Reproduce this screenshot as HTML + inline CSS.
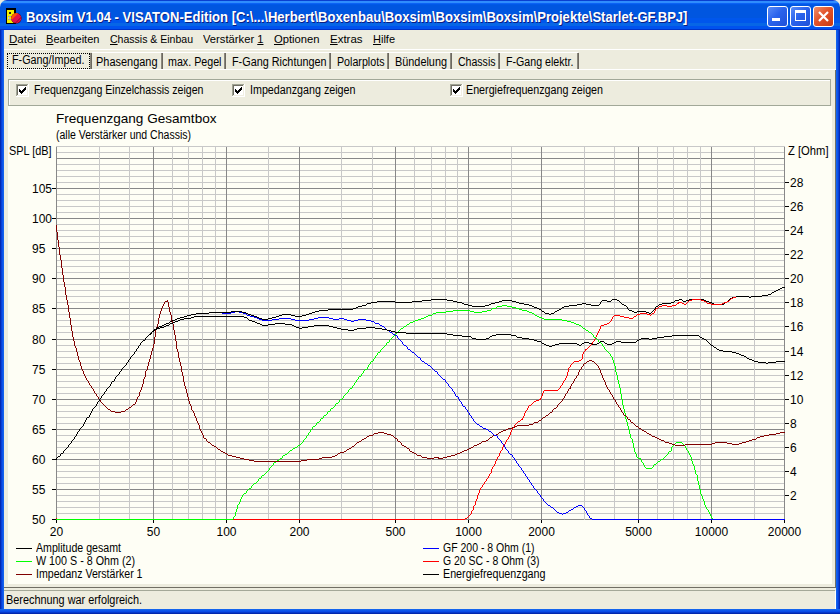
<!DOCTYPE html>
<html><head><meta charset="utf-8"><style>
html,body{margin:0;padding:0;}
body{width:840px;height:614px;overflow:hidden;position:relative;background:#edecde;font-family:"Liberation Sans",sans-serif;}
.r{position:absolute;}
.t{position:absolute;white-space:nowrap;line-height:14px;font-size:11px;color:#000;}
.ax{font-size:12px;}
</style></head><body>
<div class="r" style="left:0;top:0;width:840px;height:30px;border-radius:7px 7px 0 0;background:linear-gradient(180deg,#0a3fd0 0px,#0a3fd0 1px,#2f8dfd 1px,#2f8dfd 3px,#0b62f5 3px,#0b62f5 4px,#0058e8 4px,#0058e8 5px,#0056e0 5px,#0056e0 18px,#0056ec 18px,#0056ec 23px,#0766e6 23px,#0766e6 26px,#0052ee 26px,#0052ee 29px,#0032c8 29px,#0032c8 30px);"></div>
<div class="r" style="left:0px;top:30px;width:4px;height:584px;background:linear-gradient(90deg,#001ea0,#0a4be8 50%,#166aee);"></div>
<div class="r" style="left:836px;top:30px;width:4px;height:584px;background:linear-gradient(90deg,#166aee,#0a4be8 50%,#001ea0);"></div>
<div class="r" style="left:0px;top:609px;width:840px;height:5px;background:linear-gradient(180deg,#166aee,#0a4be8 50%,#001ea0);"></div>
<svg class="r" style="left:0;top:0" width="24" height="28" shape-rendering="crispEdges"><rect x="6" y="8" width="10" height="16" fill="#000"/><rect x="7" y="10" width="7" height="13" fill="#f4f000"/><rect x="9" y="12" width="2" height="2" fill="#222"/><rect x="8" y="16" width="3" height="1" fill="#aaa"/><rect x="8" y="17" width="1" height="2" fill="#ccc"/><rect x="8" y="19" width="3" height="1" fill="#aaa"/></svg>
<svg class="r" style="left:0;top:0" width="24" height="28"><defs><clipPath id="ball"><circle cx="16.3" cy="18.3" r="5"/></clipPath></defs><circle cx="16.3" cy="18.3" r="5.2" fill="#300"/><g clip-path="url(#ball)"><rect x="10" y="12" width="14" height="14" fill="#e0104a"/><path d="M10 12 L19.5 12 L10 21.5 Z" fill="#ff5a00"/><path d="M16 25 L23 18 L23 21 L19 25 Z" fill="#800020"/><path d="M13 25 L23 15 L23 16 L14 25 Z" fill="#900028"/></g></svg>
<div id="t1" class="t title" style="left:26px;top:10px;font-size:14px;color:#fff;transform:scaleX(0.9330);transform-origin:0 0;font-weight:bold;text-shadow:1px 1px 0 #0a1e80;">Boxsim V1.04 - VISATON-Edition [C:\...\Herbert\Boxenbau\Boxsim\Boxsim\Boxsim\Projekte\Starlet-GF.BPJ]</div>
<div class="r" style="left:767px;top:6px;width:21px;height:21px;background:linear-gradient(135deg,#5a8cf8,#2a63ec 45%,#1f50d8);border:1px solid #fff;box-sizing:border-box;border-radius:3px;"></div>
<div class="r" style="left:790px;top:6px;width:21px;height:21px;background:linear-gradient(135deg,#5a8cf8,#2a63ec 45%,#1f50d8);border:1px solid #fff;box-sizing:border-box;border-radius:3px;"></div>
<div class="r" style="left:813px;top:6px;width:21px;height:21px;background:linear-gradient(135deg,#f0906c,#e2532b 45%,#c83a12);border:1px solid #fff;box-sizing:border-box;border-radius:3px;"></div>
<div class="r" style="left:772px;top:18px;width:8px;height:3px;background:#fff;"></div>
<div class="r" style="left:795px;top:10px;width:11px;height:11px;border:1px solid #fff;border-top-width:3px;box-sizing:border-box"></div>
<svg class="r" style="left:813px;top:6px" width="21" height="21"><path d="M6 6 L15 15 M15 6 L6 15" stroke="#fff" stroke-width="2.2"/></svg>
<div class="r" style="left:4px;top:49px;width:832px;height:1px;background:#fff;"></div>
<div id="t2" class="t menu" style="left:9px;top:32px;font-size:11px;color:#000;transform:scaleX(1.0505);transform-origin:0 0;"><u>D</u>atei</div>
<div id="t3" class="t menu" style="left:46px;top:32px;font-size:11px;color:#000;transform:scaleX(1.0053);transform-origin:0 0;"><u>B</u>earbeiten</div>
<div id="t4" class="t menu" style="left:110px;top:32px;font-size:11px;color:#000;transform:scaleX(0.9557);transform-origin:0 0;"><u>C</u>hassis &amp; Einbau</div>
<div id="t5" class="t menu" style="left:203px;top:32px;font-size:11px;color:#000;transform:scaleX(1.0200);transform-origin:0 0;">Verst&auml;rker <u>1</u></div>
<div id="t6" class="t menu" style="left:274px;top:32px;font-size:11px;color:#000;transform:scaleX(1.0189);transform-origin:0 0;"><u>O</u>ptionen</div>
<div id="t7" class="t menu" style="left:330px;top:32px;font-size:11px;color:#000;transform:scaleX(1.0421);transform-origin:0 0;"><u>E</u>xtras</div>
<div id="t8" class="t menu" style="left:373px;top:32px;font-size:11px;color:#000;transform:scaleX(0.9993);transform-origin:0 0;"><u>H</u>ilfe</div>
<div class="r" style="left:92px;top:52px;width:486px;height:1px;background:#fff;"></div>
<div class="r" style="left:4px;top:69px;width:832px;height:1px;background:#fff;"></div>
<div class="r" style="left:90px;top:53px;width:1px;height:16px;background:#8a877c;"></div>
<div class="r" style="left:91px;top:53px;width:1px;height:16px;background:#6c6860;"></div>
<div class="r" style="left:161px;top:53px;width:1px;height:16px;background:#8a877c;"></div>
<div class="r" style="left:162px;top:53px;width:1px;height:16px;background:#6c6860;"></div>
<div class="r" style="left:224px;top:53px;width:1px;height:16px;background:#8a877c;"></div>
<div class="r" style="left:225px;top:53px;width:1px;height:16px;background:#6c6860;"></div>
<div class="r" style="left:329px;top:53px;width:1px;height:16px;background:#8a877c;"></div>
<div class="r" style="left:330px;top:53px;width:1px;height:16px;background:#6c6860;"></div>
<div class="r" style="left:387px;top:53px;width:1px;height:16px;background:#8a877c;"></div>
<div class="r" style="left:388px;top:53px;width:1px;height:16px;background:#6c6860;"></div>
<div class="r" style="left:450px;top:53px;width:1px;height:16px;background:#8a877c;"></div>
<div class="r" style="left:451px;top:53px;width:1px;height:16px;background:#6c6860;"></div>
<div class="r" style="left:498px;top:53px;width:1px;height:16px;background:#8a877c;"></div>
<div class="r" style="left:499px;top:53px;width:1px;height:16px;background:#6c6860;"></div>
<div class="r" style="left:577px;top:53px;width:1px;height:16px;background:#8a877c;"></div>
<div class="r" style="left:578px;top:53px;width:1px;height:16px;background:#6c6860;"></div>
<div class="r" style="left:7px;top:53px;width:83px;height:16px;border:1px dotted #000;box-sizing:border-box"></div>
<div id="t9" class="t tab" style="left:12px;top:53px;font-size:12px;color:#000;transform:scaleX(0.8984);transform-origin:0 0;">F-Gang/Imped.</div>
<div id="t10" class="t tab" style="left:96px;top:55px;font-size:12px;color:#000;transform:scaleX(0.9124);transform-origin:0 0;">Phasengang</div>
<div id="t11" class="t tab" style="left:168px;top:55px;font-size:12px;color:#000;transform:scaleX(0.8912);transform-origin:0 0;">max. Pegel</div>
<div id="t12" class="t tab" style="left:232px;top:55px;font-size:12px;color:#000;transform:scaleX(0.9023);transform-origin:0 0;">F-Gang Richtungen</div>
<div id="t13" class="t tab" style="left:337px;top:55px;font-size:12px;color:#000;transform:scaleX(0.8899);transform-origin:0 0;">Polarplots</div>
<div id="t14" class="t tab" style="left:395px;top:55px;font-size:12px;color:#000;transform:scaleX(0.9061);transform-origin:0 0;">B&uuml;ndelung</div>
<div id="t15" class="t tab" style="left:458px;top:55px;font-size:12px;color:#000;transform:scaleX(0.8785);transform-origin:0 0;">Chassis</div>
<div id="t16" class="t tab" style="left:506px;top:55px;font-size:12px;color:#000;transform:scaleX(0.8878);transform-origin:0 0;">F-Gang elektr.</div>
<div class="r" style="left:8px;top:79px;width:823px;height:27px;border:1px solid #a2a898;box-sizing:border-box;box-shadow:inset 1px 1px 0 #fff;"></div>
<svg class="r" style="left:16px;top:84px" width="13" height="13" shape-rendering="crispEdges"><rect x="0" y="0" width="12" height="1" fill="#a0a494"/><rect x="0" y="0" width="1" height="12" fill="#a0a494"/><rect x="1" y="1" width="10" height="1" fill="#716f64"/><rect x="1" y="1" width="1" height="10" fill="#716f64"/><rect x="12" y="0" width="1" height="13" fill="#fff"/><rect x="0" y="12" width="13" height="1" fill="#fff"/><rect x="11" y="1" width="1" height="11" fill="#f1efe2"/><rect x="1" y="11" width="11" height="1" fill="#f1efe2"/><rect x="2" y="2" width="9" height="9" fill="#fff"/><rect x="9" y="3" width="1" height="1" fill="#000"/><rect x="8" y="4" width="1" height="1" fill="#000"/><rect x="9" y="4" width="1" height="1" fill="#000"/><rect x="3" y="5" width="1" height="1" fill="#000"/><rect x="7" y="5" width="1" height="1" fill="#000"/><rect x="8" y="5" width="1" height="1" fill="#000"/><rect x="9" y="5" width="1" height="1" fill="#000"/><rect x="3" y="6" width="1" height="1" fill="#000"/><rect x="4" y="6" width="1" height="1" fill="#000"/><rect x="6" y="6" width="1" height="1" fill="#000"/><rect x="7" y="6" width="1" height="1" fill="#000"/><rect x="8" y="6" width="1" height="1" fill="#000"/><rect x="3" y="7" width="1" height="1" fill="#000"/><rect x="4" y="7" width="1" height="1" fill="#000"/><rect x="5" y="7" width="1" height="1" fill="#000"/><rect x="6" y="7" width="1" height="1" fill="#000"/><rect x="7" y="7" width="1" height="1" fill="#000"/><rect x="4" y="8" width="1" height="1" fill="#000"/><rect x="5" y="8" width="1" height="1" fill="#000"/><rect x="6" y="8" width="1" height="1" fill="#000"/><rect x="5" y="9" width="1" height="1" fill="#000"/></svg>
<svg class="r" style="left:232px;top:84px" width="13" height="13" shape-rendering="crispEdges"><rect x="0" y="0" width="12" height="1" fill="#a0a494"/><rect x="0" y="0" width="1" height="12" fill="#a0a494"/><rect x="1" y="1" width="10" height="1" fill="#716f64"/><rect x="1" y="1" width="1" height="10" fill="#716f64"/><rect x="12" y="0" width="1" height="13" fill="#fff"/><rect x="0" y="12" width="13" height="1" fill="#fff"/><rect x="11" y="1" width="1" height="11" fill="#f1efe2"/><rect x="1" y="11" width="11" height="1" fill="#f1efe2"/><rect x="2" y="2" width="9" height="9" fill="#fff"/><rect x="9" y="3" width="1" height="1" fill="#000"/><rect x="8" y="4" width="1" height="1" fill="#000"/><rect x="9" y="4" width="1" height="1" fill="#000"/><rect x="3" y="5" width="1" height="1" fill="#000"/><rect x="7" y="5" width="1" height="1" fill="#000"/><rect x="8" y="5" width="1" height="1" fill="#000"/><rect x="9" y="5" width="1" height="1" fill="#000"/><rect x="3" y="6" width="1" height="1" fill="#000"/><rect x="4" y="6" width="1" height="1" fill="#000"/><rect x="6" y="6" width="1" height="1" fill="#000"/><rect x="7" y="6" width="1" height="1" fill="#000"/><rect x="8" y="6" width="1" height="1" fill="#000"/><rect x="3" y="7" width="1" height="1" fill="#000"/><rect x="4" y="7" width="1" height="1" fill="#000"/><rect x="5" y="7" width="1" height="1" fill="#000"/><rect x="6" y="7" width="1" height="1" fill="#000"/><rect x="7" y="7" width="1" height="1" fill="#000"/><rect x="4" y="8" width="1" height="1" fill="#000"/><rect x="5" y="8" width="1" height="1" fill="#000"/><rect x="6" y="8" width="1" height="1" fill="#000"/><rect x="5" y="9" width="1" height="1" fill="#000"/></svg>
<svg class="r" style="left:450px;top:84px" width="13" height="13" shape-rendering="crispEdges"><rect x="0" y="0" width="12" height="1" fill="#a0a494"/><rect x="0" y="0" width="1" height="12" fill="#a0a494"/><rect x="1" y="1" width="10" height="1" fill="#716f64"/><rect x="1" y="1" width="1" height="10" fill="#716f64"/><rect x="12" y="0" width="1" height="13" fill="#fff"/><rect x="0" y="12" width="13" height="1" fill="#fff"/><rect x="11" y="1" width="1" height="11" fill="#f1efe2"/><rect x="1" y="11" width="11" height="1" fill="#f1efe2"/><rect x="2" y="2" width="9" height="9" fill="#fff"/><rect x="9" y="3" width="1" height="1" fill="#000"/><rect x="8" y="4" width="1" height="1" fill="#000"/><rect x="9" y="4" width="1" height="1" fill="#000"/><rect x="3" y="5" width="1" height="1" fill="#000"/><rect x="7" y="5" width="1" height="1" fill="#000"/><rect x="8" y="5" width="1" height="1" fill="#000"/><rect x="9" y="5" width="1" height="1" fill="#000"/><rect x="3" y="6" width="1" height="1" fill="#000"/><rect x="4" y="6" width="1" height="1" fill="#000"/><rect x="6" y="6" width="1" height="1" fill="#000"/><rect x="7" y="6" width="1" height="1" fill="#000"/><rect x="8" y="6" width="1" height="1" fill="#000"/><rect x="3" y="7" width="1" height="1" fill="#000"/><rect x="4" y="7" width="1" height="1" fill="#000"/><rect x="5" y="7" width="1" height="1" fill="#000"/><rect x="6" y="7" width="1" height="1" fill="#000"/><rect x="7" y="7" width="1" height="1" fill="#000"/><rect x="4" y="8" width="1" height="1" fill="#000"/><rect x="5" y="8" width="1" height="1" fill="#000"/><rect x="6" y="8" width="1" height="1" fill="#000"/><rect x="5" y="9" width="1" height="1" fill="#000"/></svg>
<div id="t17" class="t " style="left:34px;top:83px;font-size:12px;color:#000;transform:scaleX(0.8822);transform-origin:0 0;">Frequenzgang Einzelchassis zeigen</div>
<div id="t18" class="t " style="left:250px;top:83px;font-size:12px;color:#000;transform:scaleX(0.8934);transform-origin:0 0;">Impedanzgang zeigen</div>
<div id="t19" class="t " style="left:466px;top:83px;font-size:12px;color:#000;transform:scaleX(0.8928);transform-origin:0 0;">Energiefrequenzgang zeigen</div>
<div class="r" style="left:8px;top:106px;width:824px;height:478px;background:#fefef5;"></div>
<div class="r" style="left:4px;top:587px;width:832px;height:1px;background:#716f64;"></div>
<div class="r" style="left:835px;top:70px;width:1px;height:518px;background:#716f64;"></div>
<div class="r" style="left:4px;top:590px;width:831px;height:1px;background:#a4a898;"></div>
<div class="r" style="left:835px;top:591px;width:1px;height:18px;background:#fff;"></div>
<div id="t20" class="t " style="left:6px;top:593px;font-size:12px;color:#000;transform:scaleX(0.9061);transform-origin:0 0;">Berechnung war erfolgreich.</div>
<svg class="r" style="left:0;top:0" width="840" height="614" shape-rendering="crispEdges">
<rect x="56" y="519" width="729" height="1" fill="#888"/>
<rect x="56" y="513" width="729" height="1" fill="#c8c8c8"/>
<rect x="56" y="507" width="729" height="1" fill="#c8c8c8"/>
<rect x="56" y="501" width="729" height="1" fill="#c8c8c8"/>
<rect x="56" y="495" width="729" height="1" fill="#c8c8c8"/>
<rect x="56" y="489" width="729" height="1" fill="#888"/>
<rect x="56" y="483" width="729" height="1" fill="#c8c8c8"/>
<rect x="56" y="477" width="729" height="1" fill="#c8c8c8"/>
<rect x="56" y="471" width="729" height="1" fill="#c8c8c8"/>
<rect x="56" y="465" width="729" height="1" fill="#c8c8c8"/>
<rect x="56" y="459" width="729" height="1" fill="#888"/>
<rect x="56" y="453" width="729" height="1" fill="#c8c8c8"/>
<rect x="56" y="447" width="729" height="1" fill="#c8c8c8"/>
<rect x="56" y="441" width="729" height="1" fill="#c8c8c8"/>
<rect x="56" y="435" width="729" height="1" fill="#c8c8c8"/>
<rect x="56" y="429" width="729" height="1" fill="#888"/>
<rect x="56" y="423" width="729" height="1" fill="#c8c8c8"/>
<rect x="56" y="417" width="729" height="1" fill="#c8c8c8"/>
<rect x="56" y="411" width="729" height="1" fill="#c8c8c8"/>
<rect x="56" y="405" width="729" height="1" fill="#c8c8c8"/>
<rect x="56" y="399" width="729" height="1" fill="#888"/>
<rect x="56" y="393" width="729" height="1" fill="#c8c8c8"/>
<rect x="56" y="387" width="729" height="1" fill="#c8c8c8"/>
<rect x="56" y="381" width="729" height="1" fill="#c8c8c8"/>
<rect x="56" y="375" width="729" height="1" fill="#c8c8c8"/>
<rect x="56" y="369" width="729" height="1" fill="#888"/>
<rect x="56" y="363" width="729" height="1" fill="#c8c8c8"/>
<rect x="56" y="357" width="729" height="1" fill="#c8c8c8"/>
<rect x="56" y="351" width="729" height="1" fill="#c8c8c8"/>
<rect x="56" y="345" width="729" height="1" fill="#c8c8c8"/>
<rect x="56" y="339" width="729" height="1" fill="#888"/>
<rect x="56" y="332" width="729" height="1" fill="#c8c8c8"/>
<rect x="56" y="326" width="729" height="1" fill="#c8c8c8"/>
<rect x="56" y="320" width="729" height="1" fill="#c8c8c8"/>
<rect x="56" y="314" width="729" height="1" fill="#c8c8c8"/>
<rect x="56" y="308" width="729" height="1" fill="#888"/>
<rect x="56" y="302" width="729" height="1" fill="#c8c8c8"/>
<rect x="56" y="296" width="729" height="1" fill="#c8c8c8"/>
<rect x="56" y="290" width="729" height="1" fill="#c8c8c8"/>
<rect x="56" y="284" width="729" height="1" fill="#c8c8c8"/>
<rect x="56" y="278" width="729" height="1" fill="#888"/>
<rect x="56" y="272" width="729" height="1" fill="#c8c8c8"/>
<rect x="56" y="266" width="729" height="1" fill="#c8c8c8"/>
<rect x="56" y="260" width="729" height="1" fill="#c8c8c8"/>
<rect x="56" y="254" width="729" height="1" fill="#c8c8c8"/>
<rect x="56" y="248" width="729" height="1" fill="#888"/>
<rect x="56" y="242" width="729" height="1" fill="#c8c8c8"/>
<rect x="56" y="236" width="729" height="1" fill="#c8c8c8"/>
<rect x="56" y="230" width="729" height="1" fill="#c8c8c8"/>
<rect x="56" y="224" width="729" height="1" fill="#c8c8c8"/>
<rect x="56" y="218" width="729" height="1" fill="#888"/>
<rect x="56" y="212" width="729" height="1" fill="#c8c8c8"/>
<rect x="56" y="206" width="729" height="1" fill="#c8c8c8"/>
<rect x="56" y="200" width="729" height="1" fill="#c8c8c8"/>
<rect x="56" y="194" width="729" height="1" fill="#c8c8c8"/>
<rect x="56" y="188" width="729" height="1" fill="#888"/>
<rect x="56" y="182" width="729" height="1" fill="#c8c8c8"/>
<rect x="56" y="176" width="729" height="1" fill="#c8c8c8"/>
<rect x="56" y="170" width="729" height="1" fill="#c8c8c8"/>
<rect x="56" y="164" width="729" height="1" fill="#c8c8c8"/>
<rect x="56" y="158" width="729" height="1" fill="#888"/>
<rect x="56" y="152" width="729" height="1" fill="#c8c8c8"/>
<rect x="56" y="146" width="729" height="1" fill="#c8c8c8"/>
<rect x="56" y="146" width="1" height="374" fill="#888"/>
<rect x="99" y="146" width="1" height="374" fill="#c8c8c8"/>
<rect x="129" y="146" width="1" height="374" fill="#c8c8c8"/>
<rect x="153" y="146" width="1" height="374" fill="#888"/>
<rect x="172" y="146" width="1" height="374" fill="#c8c8c8"/>
<rect x="188" y="146" width="1" height="374" fill="#c8c8c8"/>
<rect x="202" y="146" width="1" height="374" fill="#c8c8c8"/>
<rect x="215" y="146" width="1" height="374" fill="#c8c8c8"/>
<rect x="226" y="146" width="1" height="374" fill="#888"/>
<rect x="268" y="146" width="1" height="374" fill="#c8c8c8"/>
<rect x="299" y="146" width="1" height="374" fill="#888"/>
<rect x="341" y="146" width="1" height="374" fill="#c8c8c8"/>
<rect x="372" y="146" width="1" height="374" fill="#c8c8c8"/>
<rect x="395" y="146" width="1" height="374" fill="#888"/>
<rect x="414" y="146" width="1" height="374" fill="#c8c8c8"/>
<rect x="431" y="146" width="1" height="374" fill="#c8c8c8"/>
<rect x="445" y="146" width="1" height="374" fill="#c8c8c8"/>
<rect x="457" y="146" width="1" height="374" fill="#c8c8c8"/>
<rect x="468" y="146" width="1" height="374" fill="#888"/>
<rect x="511" y="146" width="1" height="374" fill="#c8c8c8"/>
<rect x="541" y="146" width="1" height="374" fill="#888"/>
<rect x="584" y="146" width="1" height="374" fill="#c8c8c8"/>
<rect x="614" y="146" width="1" height="374" fill="#c8c8c8"/>
<rect x="638" y="146" width="1" height="374" fill="#888"/>
<rect x="657" y="146" width="1" height="374" fill="#c8c8c8"/>
<rect x="673" y="146" width="1" height="374" fill="#c8c8c8"/>
<rect x="687" y="146" width="1" height="374" fill="#c8c8c8"/>
<rect x="700" y="146" width="1" height="374" fill="#c8c8c8"/>
<rect x="711" y="146" width="1" height="374" fill="#888"/>
<rect x="754" y="146" width="1" height="374" fill="#c8c8c8"/>
<rect x="784" y="146" width="1" height="374" fill="#888"/>
<rect x="784" y="146" width="1" height="374" fill="#888"/>
<rect x="56" y="146" width="1" height="374" fill="#888"/>
<rect x="784" y="146" width="1" height="374" fill="#888"/>
<rect x="56" y="146" width="729" height="1" fill="#c8c8c8"/>
<rect x="52" y="519" width="4" height="1" fill="#000"/>
<rect x="52" y="489" width="4" height="1" fill="#000"/>
<rect x="52" y="459" width="4" height="1" fill="#000"/>
<rect x="52" y="429" width="4" height="1" fill="#000"/>
<rect x="52" y="399" width="4" height="1" fill="#000"/>
<rect x="52" y="369" width="4" height="1" fill="#000"/>
<rect x="52" y="339" width="4" height="1" fill="#000"/>
<rect x="52" y="308" width="4" height="1" fill="#000"/>
<rect x="52" y="278" width="4" height="1" fill="#000"/>
<rect x="52" y="248" width="4" height="1" fill="#000"/>
<rect x="52" y="218" width="4" height="1" fill="#000"/>
<rect x="52" y="188" width="4" height="1" fill="#000"/>
<rect x="785" y="495" width="4" height="1" fill="#000"/>
<rect x="785" y="471" width="4" height="1" fill="#000"/>
<rect x="785" y="447" width="4" height="1" fill="#000"/>
<rect x="785" y="423" width="4" height="1" fill="#000"/>
<rect x="785" y="399" width="4" height="1" fill="#000"/>
<rect x="785" y="375" width="4" height="1" fill="#000"/>
<rect x="785" y="351" width="4" height="1" fill="#000"/>
<rect x="785" y="326" width="4" height="1" fill="#000"/>
<rect x="785" y="302" width="4" height="1" fill="#000"/>
<rect x="785" y="278" width="4" height="1" fill="#000"/>
<rect x="785" y="254" width="4" height="1" fill="#000"/>
<rect x="785" y="230" width="4" height="1" fill="#000"/>
<rect x="785" y="206" width="4" height="1" fill="#000"/>
<rect x="785" y="182" width="4" height="1" fill="#000"/>
<rect x="56" y="520" width="1" height="3" fill="#000"/>
<rect x="153" y="520" width="1" height="3" fill="#000"/>
<rect x="226" y="520" width="1" height="3" fill="#000"/>
<rect x="299" y="520" width="1" height="3" fill="#000"/>
<rect x="395" y="520" width="1" height="3" fill="#000"/>
<rect x="468" y="520" width="1" height="3" fill="#000"/>
<rect x="541" y="520" width="1" height="3" fill="#000"/>
<rect x="638" y="520" width="1" height="3" fill="#000"/>
<rect x="711" y="520" width="1" height="3" fill="#000"/>
<rect x="784" y="520" width="1" height="3" fill="#000"/>
</svg>
<div class="t ax" style="left:32px;top:513px">50</div>
<div class="t ax" style="left:32px;top:483px">55</div>
<div class="t ax" style="left:32px;top:453px">60</div>
<div class="t ax" style="left:32px;top:423px">65</div>
<div class="t ax" style="left:32px;top:393px">70</div>
<div class="t ax" style="left:32px;top:363px">75</div>
<div class="t ax" style="left:32px;top:333px">80</div>
<div class="t ax" style="left:32px;top:302px">85</div>
<div class="t ax" style="left:32px;top:272px">90</div>
<div class="t ax" style="left:32px;top:242px">95</div>
<div class="t ax" style="left:32px;top:212px">100</div>
<div class="t ax" style="left:32px;top:182px">105</div>
<div id="t21" class="t ax" style="left:790px;top:489px;font-size:12px;color:#000;">2</div>
<div id="t22" class="t ax" style="left:790px;top:465px;font-size:12px;color:#000;">4</div>
<div id="t23" class="t ax" style="left:790px;top:441px;font-size:12px;color:#000;">6</div>
<div id="t24" class="t ax" style="left:790px;top:417px;font-size:12px;color:#000;">8</div>
<div id="t25" class="t ax" style="left:790px;top:393px;font-size:12px;color:#000;">10</div>
<div id="t26" class="t ax" style="left:790px;top:369px;font-size:12px;color:#000;">12</div>
<div id="t27" class="t ax" style="left:790px;top:345px;font-size:12px;color:#000;">14</div>
<div id="t28" class="t ax" style="left:790px;top:320px;font-size:12px;color:#000;">16</div>
<div id="t29" class="t ax" style="left:790px;top:296px;font-size:12px;color:#000;">18</div>
<div id="t30" class="t ax" style="left:790px;top:272px;font-size:12px;color:#000;">20</div>
<div id="t31" class="t ax" style="left:790px;top:248px;font-size:12px;color:#000;">22</div>
<div id="t32" class="t ax" style="left:790px;top:224px;font-size:12px;color:#000;">24</div>
<div id="t33" class="t ax" style="left:790px;top:200px;font-size:12px;color:#000;">26</div>
<div id="t34" class="t ax" style="left:790px;top:176px;font-size:12px;color:#000;">28</div>
<div class="t ax" style="left:16px;width:81px;text-align:center;top:525px">20</div>
<div class="t ax" style="left:113px;width:81px;text-align:center;top:525px">50</div>
<div class="t ax" style="left:186px;width:81px;text-align:center;top:525px">100</div>
<div class="t ax" style="left:259px;width:81px;text-align:center;top:525px">200</div>
<div class="t ax" style="left:355px;width:81px;text-align:center;top:525px">500</div>
<div class="t ax" style="left:428px;width:81px;text-align:center;top:525px">1000</div>
<div class="t ax" style="left:501px;width:81px;text-align:center;top:525px">2000</div>
<div class="t ax" style="left:598px;width:81px;text-align:center;top:525px">5000</div>
<div class="t ax" style="left:671px;width:81px;text-align:center;top:525px">10000</div>
<div class="t ax" style="left:744px;width:81px;text-align:center;top:525px">20000</div>
<div id="t35" class="t ax" style="left:9px;top:144px;font-size:12px;color:#000;transform:scaleX(0.9058);transform-origin:0 0;">SPL [dB]</div>
<div id="t36" class="t ax" style="left:788px;top:144px;font-size:12px;color:#000;transform:scaleX(0.9344);transform-origin:0 0;">Z [Ohm]</div>
<div id="t37" class="t ctitle" style="left:56px;top:112px;font-size:13px;color:#000;transform:scaleX(1.0426);transform-origin:0 0;">Frequenzgang Gesamtbox</div>
<div id="t38" class="t ax" style="left:56px;top:128px;font-size:12px;color:#000;transform:scaleX(0.8763);transform-origin:0 0;">(alle Verst&auml;rker und Chassis)</div>
<div class="r" style="left:16px;top:548px;width:16px;height:1px;background:#000;"></div>
<div id="t39" class="t leg" style="left:36px;top:541px;font-size:12px;color:#000;transform:scaleX(0.8850);transform-origin:0 0;">Amplitude gesamt</div>
<div class="r" style="left:16px;top:561px;width:16px;height:1px;background:#00ff00;"></div>
<div id="t40" class="t leg" style="left:36px;top:554px;font-size:12px;color:#000;transform:scaleX(0.8943);transform-origin:0 0;">W 100 S - 8 Ohm (2)</div>
<div class="r" style="left:16px;top:574px;width:16px;height:1px;background:#800000;"></div>
<div id="t41" class="t leg" style="left:36px;top:567px;font-size:12px;color:#000;transform:scaleX(0.8821);transform-origin:0 0;">Impedanz Verst&auml;rker 1</div>
<div class="r" style="left:423px;top:548px;width:16px;height:1px;background:#0000ff;"></div>
<div id="t42" class="t leg" style="left:443px;top:541px;font-size:12px;color:#000;transform:scaleX(0.8739);transform-origin:0 0;">GF 200 - 8 Ohm (1)</div>
<div class="r" style="left:423px;top:561px;width:16px;height:1px;background:#ff0000;"></div>
<div id="t43" class="t leg" style="left:443px;top:554px;font-size:12px;color:#000;transform:scaleX(0.8717);transform-origin:0 0;">G 20 SC - 8 Ohm (3)</div>
<div class="r" style="left:423px;top:574px;width:16px;height:1px;background:#000;"></div>
<div id="t44" class="t leg" style="left:443px;top:567px;font-size:12px;color:#000;transform:scaleX(0.8931);transform-origin:0 0;">Energiefrequenzgang</div>
<svg class="r" style="left:0;top:0" width="840" height="614" shape-rendering="crispEdges">
<path d="M733 297h3v1h-3zM731 298h2v1h-2zM692 299h9v1h-9zM730 299h1v1h-1zM689 300h3v1h-3zM701 300h3v1h-3zM729 300h1v1h-1zM688 301h1v1h-1zM704 301h2v1h-2zM727 301h2v1h-2zM678 302h4v1h-4zM687 302h1v1h-1zM706 302h1v1h-1zM724 302h3v1h-3zM677 303h2v1h-2zM682 303h2v1h-2zM686 303h1v1h-1zM707 303h4v1h-4zM722 303h2v1h-2zM676 304h1v1h-1zM684 304h2v1h-2zM711 304h11v1h-11zM662 305h5v1h-5zM672 305h4v1h-4zM659 306h3v1h-3zM667 306h5v1h-5zM658 307h1v1h-1zM656 308h2v1h-2zM655 309h1v1h-1zM655 310h1v1h-1zM654 311h1v1h-1zM654 312h1v1h-1zM640 313h7v1h-7zM652 313h2v1h-2zM637 314h3v1h-3zM647 314h3v1h-3zM651 314h1v1h-1zM614 315h6v1h-6zM636 315h1v1h-1zM650 315h1v1h-1zM613 316h1v1h-1zM620 316h4v1h-4zM634 316h2v1h-2zM612 317h1v1h-1zM624 317h5v1h-5zM633 317h1v1h-1zM612 318h1v1h-1zM629 318h4v1h-4zM611 319h1v1h-1zM611 320h1v1h-1zM610 321h1v1h-1zM609 322h1v1h-1zM607 323h2v1h-2zM604 324h3v1h-3zM601 325h3v1h-3zM600 326h1v1h-1zM600 327h1v1h-1zM600 328h1v1h-1zM599 329h1v1h-1zM599 330h1v1h-1zM598 331h1v1h-1zM598 332h1v1h-1zM597 333h1v1h-1zM597 334h1v1h-1zM596 335h1v1h-1zM596 336h1v1h-1zM595 337h1v1h-1zM595 338h1v1h-1zM594 339h1v1h-1zM594 340h1v1h-1zM593 341h1v1h-1zM592 342h1v1h-1zM592 343h1v1h-1zM591 344h2v1h-2zM590 345h1v1h-1zM589 346h1v1h-1zM588 347h1v1h-1zM587 348h1v1h-1zM585 349h2v1h-2zM585 350h1v1h-1zM584 351h1v1h-1zM583 352h1v1h-1zM583 353h1v1h-1zM582 354h1v1h-1zM582 355h1v1h-1zM582 356h1v1h-1zM582 357h1v1h-1zM582 358h1v1h-1zM581 359h1v1h-1zM579 360h2v1h-2zM574 361h5v1h-5zM573 362h1v1h-1zM572 363h1v1h-1zM571 364h1v1h-1zM570 365h1v1h-1zM570 366h1v1h-1zM569 367h1v1h-1zM568 368h1v1h-1zM568 369h1v1h-1zM568 370h1v1h-1zM568 371h1v1h-1zM567 372h1v1h-1zM567 373h1v1h-1zM567 374h1v1h-1zM567 375h1v1h-1zM566 376h1v1h-1zM566 377h1v1h-1zM565 378h1v1h-1zM565 379h1v1h-1zM564 380h1v1h-1zM563 381h1v1h-1zM563 382h1v1h-1zM562 383h1v1h-1zM562 384h1v1h-1zM561 385h1v1h-1zM560 386h1v1h-1zM560 387h1v1h-1zM559 388h1v1h-1zM558 389h1v1h-1zM544 390h14v1h-14zM543 391h1v1h-1zM543 392h1v1h-1zM542 393h1v1h-1zM542 394h1v1h-1zM542 395h1v1h-1zM541 396h1v1h-1zM541 397h1v1h-1zM540 398h1v1h-1zM539 399h2v1h-2zM536 400h3v1h-3zM534 401h2v1h-2zM533 402h1v1h-1zM532 403h1v1h-1zM531 404h1v1h-1zM529 405h2v1h-2zM528 406h1v1h-1zM528 407h1v1h-1zM527 408h1v1h-1zM527 409h1v1h-1zM526 410h1v1h-1zM525 411h1v1h-1zM525 412h1v1h-1zM524 413h1v1h-1zM524 414h1v1h-1zM524 415h1v1h-1zM523 416h1v1h-1zM523 417h1v1h-1zM522 418h1v1h-1zM521 419h2v1h-2zM520 420h1v1h-1zM518 421h2v1h-2zM517 422h1v1h-1zM516 423h1v1h-1zM515 424h1v1h-1zM514 425h1v1h-1zM514 426h1v1h-1zM513 427h1v1h-1zM512 428h1v1h-1zM512 429h1v1h-1zM511 430h1v1h-1zM511 431h1v1h-1zM510 432h1v1h-1zM510 433h1v1h-1zM510 434h1v1h-1zM509 435h1v1h-1zM509 436h1v1h-1zM508 437h1v1h-1zM508 438h1v1h-1zM507 439h1v1h-1zM506 440h1v1h-1zM506 441h1v1h-1zM505 442h1v1h-1zM505 443h1v1h-1zM504 444h1v1h-1zM503 445h1v1h-1zM503 446h1v1h-1zM502 447h1v1h-1zM502 448h1v1h-1zM502 449h1v1h-1zM501 450h1v1h-1zM500 451h1v1h-1zM500 452h1v1h-1zM499 453h1v1h-1zM499 454h1v1h-1zM499 455h1v1h-1zM498 456h1v1h-1zM497 457h1v1h-1zM497 458h1v1h-1zM496 459h1v1h-1zM496 460h1v1h-1zM495 461h1v1h-1zM495 462h1v1h-1zM495 463h1v1h-1zM494 464h1v1h-1zM494 465h1v1h-1zM493 466h1v1h-1zM492 467h1v1h-1zM492 468h1v1h-1zM491 469h1v1h-1zM491 470h1v1h-1zM491 471h1v1h-1zM491 472h1v1h-1zM490 473h1v1h-1zM489 474h1v1h-1zM489 475h1v1h-1zM488 476h1v1h-1zM488 477h1v1h-1zM487 478h1v1h-1zM486 479h1v1h-1zM486 480h1v1h-1zM485 481h1v1h-1zM484 482h1v1h-1zM484 483h1v1h-1zM483 484h1v1h-1zM482 485h1v1h-1zM482 486h1v1h-1zM481 487h1v1h-1zM480 488h1v1h-1zM480 489h1v1h-1zM479 490h1v1h-1zM479 491h1v1h-1zM479 492h1v1h-1zM478 493h1v1h-1zM478 494h1v1h-1zM477 495h1v1h-1zM477 496h1v1h-1zM477 497h1v1h-1zM477 498h1v1h-1zM476 499h1v1h-1zM476 500h1v1h-1zM475 501h1v1h-1zM475 502h1v1h-1zM475 503h1v1h-1zM475 504h1v1h-1zM474 505h1v1h-1zM473 506h1v1h-1zM473 507h1v1h-1zM473 508h1v1h-1zM473 509h1v1h-1zM472 510h1v1h-1zM471 511h1v1h-1zM471 512h1v1h-1zM471 513h1v1h-1zM470 514h1v1h-1zM469 515h1v1h-1zM468 516h1v1h-1zM467 517h1v1h-1zM56 518h1v1h-1zM465 518h2v1h-2zM56 519h409v1h-409z" fill="#ff0000"/>
<path d="M502 305h5v1h-5zM497 306h5v1h-5zM507 306h5v1h-5zM496 307h1v1h-1zM512 307h4v1h-4zM492 308h4v1h-4zM516 308h3v1h-3zM491 309h1v1h-1zM519 309h3v1h-3zM453 310h17v1h-17zM487 310h4v1h-4zM522 310h5v1h-5zM446 311h7v1h-7zM470 311h4v1h-4zM482 311h5v1h-5zM527 311h2v1h-2zM436 312h10v1h-10zM474 312h8v1h-8zM529 312h3v1h-3zM433 313h3v1h-3zM532 313h2v1h-2zM432 314h1v1h-1zM534 314h1v1h-1zM428 315h4v1h-4zM535 315h2v1h-2zM426 316h2v1h-2zM537 316h2v1h-2zM424 317h2v1h-2zM539 317h3v1h-3zM421 318h3v1h-3zM542 318h2v1h-2zM418 319h3v1h-3zM544 319h18v1h-18zM415 320h3v1h-3zM562 320h5v1h-5zM413 321h2v1h-2zM567 321h4v1h-4zM410 322h3v1h-3zM571 322h3v1h-3zM409 323h1v1h-1zM574 323h2v1h-2zM407 324h2v1h-2zM576 324h3v1h-3zM406 325h1v1h-1zM579 325h2v1h-2zM404 326h2v1h-2zM581 326h1v1h-1zM403 327h1v1h-1zM582 327h1v1h-1zM401 328h2v1h-2zM583 328h2v1h-2zM400 329h1v1h-1zM585 329h1v1h-1zM399 330h1v1h-1zM586 330h2v1h-2zM398 331h1v1h-1zM588 331h1v1h-1zM397 332h1v1h-1zM589 332h2v1h-2zM396 333h1v1h-1zM591 333h1v1h-1zM395 334h1v1h-1zM592 334h1v1h-1zM394 335h1v1h-1zM593 335h1v1h-1zM393 336h1v1h-1zM593 336h1v1h-1zM392 337h1v1h-1zM594 337h2v1h-2zM391 338h1v1h-1zM596 338h1v1h-1zM390 339h1v1h-1zM597 339h1v1h-1zM389 340h1v1h-1zM598 340h1v1h-1zM389 341h1v1h-1zM598 341h1v1h-1zM387 342h2v1h-2zM599 342h2v1h-2zM386 343h1v1h-1zM601 343h1v1h-1zM386 344h1v1h-1zM602 344h1v1h-1zM385 345h1v1h-1zM602 345h1v1h-1zM384 346h1v1h-1zM603 346h1v1h-1zM383 347h1v1h-1zM604 347h1v1h-1zM382 348h1v1h-1zM604 348h1v1h-1zM381 349h1v1h-1zM605 349h1v1h-1zM380 350h1v1h-1zM606 350h1v1h-1zM380 351h1v1h-1zM607 351h1v1h-1zM378 352h2v1h-2zM608 352h1v1h-1zM377 353h1v1h-1zM609 353h1v1h-1zM377 354h1v1h-1zM610 354h1v1h-1zM376 355h1v1h-1zM610 355h1v1h-1zM375 356h1v1h-1zM611 356h1v1h-1zM375 357h1v1h-1zM612 357h1v1h-1zM374 358h1v1h-1zM612 358h1v1h-1zM373 359h1v1h-1zM612 359h1v1h-1zM373 360h1v1h-1zM613 360h1v1h-1zM371 361h2v1h-2zM613 361h1v1h-1zM370 362h1v1h-1zM613 362h1v1h-1zM370 363h1v1h-1zM614 363h1v1h-1zM369 364h1v1h-1zM614 364h1v1h-1zM368 365h1v1h-1zM614 365h1v1h-1zM368 366h1v1h-1zM615 366h1v1h-1zM367 367h1v1h-1zM615 367h1v1h-1zM367 368h1v1h-1zM615 368h1v1h-1zM365 369h2v1h-2zM615 369h1v1h-1zM364 370h1v1h-1zM615 370h1v1h-1zM363 371h1v1h-1zM615 371h1v1h-1zM363 372h1v1h-1zM616 372h1v1h-1zM362 373h1v1h-1zM616 373h1v1h-1zM361 374h1v1h-1zM616 374h1v1h-1zM361 375h1v1h-1zM617 375h1v1h-1zM359 376h2v1h-2zM617 376h1v1h-1zM358 377h1v1h-1zM617 377h1v1h-1zM358 378h1v1h-1zM617 378h1v1h-1zM357 379h1v1h-1zM617 379h1v1h-1zM356 380h1v1h-1zM618 380h1v1h-1zM356 381h1v1h-1zM618 381h1v1h-1zM355 382h1v1h-1zM618 382h1v1h-1zM354 383h1v1h-1zM618 383h1v1h-1zM354 384h1v1h-1zM619 384h1v1h-1zM353 385h1v1h-1zM619 385h1v1h-1zM352 386h1v1h-1zM619 386h1v1h-1zM352 387h1v1h-1zM619 387h1v1h-1zM350 388h2v1h-2zM620 388h1v1h-1zM349 389h1v1h-1zM620 389h1v1h-1zM348 390h1v1h-1zM620 390h1v1h-1zM348 391h1v1h-1zM620 391h1v1h-1zM347 392h1v1h-1zM620 392h1v1h-1zM346 393h1v1h-1zM620 393h1v1h-1zM345 394h1v1h-1zM621 394h1v1h-1zM344 395h1v1h-1zM621 395h1v1h-1zM343 396h1v1h-1zM621 396h1v1h-1zM343 397h1v1h-1zM621 397h1v1h-1zM342 398h1v1h-1zM621 398h1v1h-1zM340 399h2v1h-2zM622 399h1v1h-1zM339 400h1v1h-1zM622 400h1v1h-1zM339 401h1v1h-1zM622 401h1v1h-1zM338 402h1v1h-1zM622 402h1v1h-1zM336 403h2v1h-2zM622 403h1v1h-1zM335 404h1v1h-1zM622 404h1v1h-1zM335 405h1v1h-1zM623 405h1v1h-1zM334 406h1v1h-1zM623 406h1v1h-1zM333 407h1v1h-1zM623 407h1v1h-1zM331 408h2v1h-2zM623 408h1v1h-1zM330 409h1v1h-1zM624 409h1v1h-1zM330 410h1v1h-1zM624 410h1v1h-1zM328 411h2v1h-2zM624 411h1v1h-1zM327 412h1v1h-1zM624 412h1v1h-1zM327 413h1v1h-1zM625 413h1v1h-1zM326 414h1v1h-1zM625 414h1v1h-1zM324 415h2v1h-2zM625 415h1v1h-1zM323 416h1v1h-1zM625 416h1v1h-1zM323 417h1v1h-1zM625 417h1v1h-1zM321 418h2v1h-2zM625 418h1v1h-1zM320 419h1v1h-1zM626 419h1v1h-1zM320 420h1v1h-1zM626 420h1v1h-1zM319 421h1v1h-1zM626 421h1v1h-1zM317 422h2v1h-2zM627 422h1v1h-1zM316 423h1v1h-1zM627 423h1v1h-1zM316 424h1v1h-1zM627 424h1v1h-1zM315 425h1v1h-1zM627 425h1v1h-1zM313 426h2v1h-2zM628 426h1v1h-1zM312 427h1v1h-1zM628 427h1v1h-1zM312 428h1v1h-1zM628 428h1v1h-1zM311 429h1v1h-1zM628 429h1v1h-1zM310 430h1v1h-1zM629 430h1v1h-1zM310 431h1v1h-1zM629 431h1v1h-1zM309 432h1v1h-1zM629 432h1v1h-1zM308 433h1v1h-1zM629 433h1v1h-1zM308 434h1v1h-1zM630 434h1v1h-1zM307 435h1v1h-1zM630 435h1v1h-1zM306 436h1v1h-1zM630 436h1v1h-1zM306 437h1v1h-1zM630 437h1v1h-1zM305 438h1v1h-1zM631 438h1v1h-1zM304 439h1v1h-1zM632 439h1v1h-1zM303 440h1v1h-1zM632 440h1v1h-1zM303 441h1v1h-1zM632 441h1v1h-1zM302 442h1v1h-1zM632 442h1v1h-1zM676 442h6v1h-6zM301 443h1v1h-1zM633 443h1v1h-1zM675 443h1v1h-1zM682 443h1v1h-1zM300 444h1v1h-1zM633 444h1v1h-1zM674 444h1v1h-1zM683 444h1v1h-1zM298 445h2v1h-2zM633 445h1v1h-1zM673 445h1v1h-1zM684 445h1v1h-1zM297 446h1v1h-1zM633 446h1v1h-1zM672 446h1v1h-1zM685 446h1v1h-1zM295 447h2v1h-2zM633 447h1v1h-1zM671 447h1v1h-1zM685 447h1v1h-1zM293 448h2v1h-2zM634 448h1v1h-1zM671 448h1v1h-1zM686 448h1v1h-1zM292 449h1v1h-1zM634 449h1v1h-1zM671 449h1v1h-1zM686 449h1v1h-1zM290 450h2v1h-2zM634 450h1v1h-1zM671 450h1v1h-1zM687 450h1v1h-1zM289 451h1v1h-1zM634 451h1v1h-1zM669 451h2v1h-2zM688 451h1v1h-1zM288 452h1v1h-1zM635 452h1v1h-1zM668 452h1v1h-1zM688 452h1v1h-1zM287 453h1v1h-1zM635 453h1v1h-1zM668 453h1v1h-1zM689 453h1v1h-1zM285 454h2v1h-2zM636 454h1v1h-1zM667 454h1v1h-1zM689 454h1v1h-1zM283 455h2v1h-2zM636 455h1v1h-1zM666 455h1v1h-1zM690 455h1v1h-1zM282 456h1v1h-1zM636 456h1v1h-1zM665 456h1v1h-1zM690 456h1v1h-1zM282 457h1v1h-1zM637 457h1v1h-1zM664 457h1v1h-1zM691 457h1v1h-1zM280 458h2v1h-2zM638 458h3v1h-3zM663 458h1v1h-1zM691 458h1v1h-1zM279 459h1v1h-1zM640 459h1v1h-1zM661 459h2v1h-2zM691 459h1v1h-1zM277 460h2v1h-2zM641 460h1v1h-1zM660 460h1v1h-1zM691 460h1v1h-1zM276 461h1v1h-1zM641 461h1v1h-1zM658 461h2v1h-2zM692 461h1v1h-1zM274 462h2v1h-2zM642 462h1v1h-1zM657 462h1v1h-1zM692 462h1v1h-1zM273 463h1v1h-1zM643 463h1v1h-1zM656 463h1v1h-1zM692 463h1v1h-1zM273 464h1v1h-1zM643 464h1v1h-1zM654 464h2v1h-2zM693 464h1v1h-1zM272 465h1v1h-1zM644 465h1v1h-1zM653 465h1v1h-1zM693 465h1v1h-1zM271 466h1v1h-1zM644 466h1v1h-1zM653 466h1v1h-1zM694 466h1v1h-1zM270 467h1v1h-1zM645 467h1v1h-1zM652 467h1v1h-1zM694 467h1v1h-1zM269 468h1v1h-1zM646 468h6v1h-6zM694 468h1v1h-1zM269 469h1v1h-1zM694 469h1v1h-1zM268 470h1v1h-1zM695 470h1v1h-1zM267 471h1v1h-1zM695 471h1v1h-1zM266 472h1v1h-1zM695 472h1v1h-1zM265 473h1v1h-1zM695 473h1v1h-1zM264 474h1v1h-1zM696 474h1v1h-1zM262 475h2v1h-2zM697 475h1v1h-1zM261 476h1v1h-1zM697 476h1v1h-1zM261 477h1v1h-1zM697 477h1v1h-1zM259 478h2v1h-2zM697 478h1v1h-1zM258 479h1v1h-1zM697 479h1v1h-1zM258 480h1v1h-1zM697 480h1v1h-1zM257 481h1v1h-1zM698 481h1v1h-1zM256 482h1v1h-1zM698 482h1v1h-1zM254 483h2v1h-2zM698 483h1v1h-1zM253 484h1v1h-1zM698 484h1v1h-1zM252 485h1v1h-1zM699 485h1v1h-1zM251 486h1v1h-1zM699 486h1v1h-1zM251 487h1v1h-1zM699 487h1v1h-1zM249 488h2v1h-2zM699 488h1v1h-1zM248 489h1v1h-1zM700 489h1v1h-1zM247 490h1v1h-1zM700 490h1v1h-1zM246 491h1v1h-1zM700 491h1v1h-1zM246 492h1v1h-1zM700 492h1v1h-1zM244 493h2v1h-2zM700 493h1v1h-1zM243 494h1v1h-1zM701 494h1v1h-1zM242 495h1v1h-1zM701 495h1v1h-1zM242 496h1v1h-1zM702 496h1v1h-1zM241 497h1v1h-1zM702 497h1v1h-1zM241 498h1v1h-1zM702 498h1v1h-1zM240 499h1v1h-1zM703 499h1v1h-1zM240 500h1v1h-1zM703 500h1v1h-1zM240 501h1v1h-1zM704 501h1v1h-1zM239 502h1v1h-1zM704 502h1v1h-1zM239 503h1v1h-1zM704 503h1v1h-1zM238 504h1v1h-1zM704 504h1v1h-1zM237 505h1v1h-1zM705 505h1v1h-1zM237 506h1v1h-1zM705 506h1v1h-1zM237 507h1v1h-1zM706 507h1v1h-1zM237 508h1v1h-1zM706 508h1v1h-1zM236 509h1v1h-1zM707 509h1v1h-1zM236 510h1v1h-1zM708 510h1v1h-1zM236 511h1v1h-1zM708 511h1v1h-1zM235 512h1v1h-1zM709 512h1v1h-1zM235 513h1v1h-1zM709 513h1v1h-1zM235 514h1v1h-1zM710 514h1v1h-1zM235 515h1v1h-1zM710 515h1v1h-1zM234 516h1v1h-1zM711 516h1v1h-1zM233 517h1v1h-1zM711 517h1v1h-1zM233 518h1v1h-1zM712 518h1v1h-1zM56 519h177v1h-177zM713 519h1v1h-1z" fill="#00ff00"/>
<path d="M56 225h1v1h-1zM56 226h1v1h-1zM56 227h1v1h-1zM56 228h1v1h-1zM56 229h1v1h-1zM56 230h1v1h-1zM56 231h1v1h-1zM57 232h1v1h-1zM57 233h1v1h-1zM57 234h1v1h-1zM57 235h1v1h-1zM57 236h1v1h-1zM57 237h1v1h-1zM57 238h1v1h-1zM57 239h1v1h-1zM58 240h1v1h-1zM58 241h1v1h-1zM58 242h1v1h-1zM58 243h1v1h-1zM58 244h1v1h-1zM58 245h1v1h-1zM58 246h1v1h-1zM59 247h1v1h-1zM59 248h1v1h-1zM59 249h1v1h-1zM59 250h1v1h-1zM59 251h1v1h-1zM59 252h1v1h-1zM59 253h1v1h-1zM59 254h1v1h-1zM60 255h1v1h-1zM60 256h1v1h-1zM60 257h1v1h-1zM60 258h1v1h-1zM60 259h1v1h-1zM61 260h1v1h-1zM61 261h1v1h-1zM61 262h1v1h-1zM61 263h1v1h-1zM61 264h1v1h-1zM61 265h1v1h-1zM61 266h1v1h-1zM61 267h1v1h-1zM62 268h1v1h-1zM62 269h1v1h-1zM62 270h1v1h-1zM62 271h1v1h-1zM62 272h1v1h-1zM62 273h1v1h-1zM62 274h1v1h-1zM63 275h1v1h-1zM63 276h1v1h-1zM63 277h1v1h-1zM63 278h1v1h-1zM63 279h1v1h-1zM63 280h1v1h-1zM63 281h1v1h-1zM64 282h1v1h-1zM64 283h1v1h-1zM64 284h1v1h-1zM64 285h1v1h-1zM64 286h1v1h-1zM65 287h1v1h-1zM65 288h1v1h-1zM65 289h1v1h-1zM65 290h1v1h-1zM65 291h1v1h-1zM65 292h1v1h-1zM65 293h1v1h-1zM65 294h1v1h-1zM66 295h1v1h-1zM66 296h1v1h-1zM66 297h1v1h-1zM66 298h1v1h-1zM66 299h1v1h-1zM67 300h1v1h-1zM167 300h1v1h-1zM67 301h1v1h-1zM165 301h3v1h-3zM67 302h1v1h-1zM164 302h1v1h-1zM168 302h1v1h-1zM67 303h1v1h-1zM164 303h1v1h-1zM168 303h1v1h-1zM67 304h1v1h-1zM163 304h1v1h-1zM168 304h1v1h-1zM68 305h1v1h-1zM163 305h1v1h-1zM168 305h1v1h-1zM68 306h1v1h-1zM162 306h1v1h-1zM168 306h1v1h-1zM68 307h1v1h-1zM162 307h1v1h-1zM169 307h1v1h-1zM68 308h1v1h-1zM161 308h1v1h-1zM169 308h1v1h-1zM68 309h1v1h-1zM161 309h1v1h-1zM169 309h1v1h-1zM68 310h1v1h-1zM161 310h1v1h-1zM169 310h1v1h-1zM68 311h1v1h-1zM160 311h1v1h-1zM169 311h1v1h-1zM69 312h1v1h-1zM160 312h1v1h-1zM170 312h1v1h-1zM69 313h1v1h-1zM160 313h1v1h-1zM170 313h1v1h-1zM69 314h1v1h-1zM159 314h1v1h-1zM170 314h1v1h-1zM69 315h1v1h-1zM159 315h1v1h-1zM171 315h1v1h-1zM69 316h1v1h-1zM159 316h1v1h-1zM171 316h1v1h-1zM69 317h1v1h-1zM159 317h1v1h-1zM171 317h1v1h-1zM70 318h1v1h-1zM158 318h1v1h-1zM171 318h1v1h-1zM70 319h1v1h-1zM158 319h1v1h-1zM171 319h1v1h-1zM70 320h1v1h-1zM158 320h1v1h-1zM171 320h1v1h-1zM70 321h1v1h-1zM158 321h1v1h-1zM172 321h1v1h-1zM70 322h1v1h-1zM158 322h1v1h-1zM172 322h1v1h-1zM70 323h1v1h-1zM158 323h1v1h-1zM172 323h1v1h-1zM70 324h1v1h-1zM157 324h1v1h-1zM173 324h1v1h-1zM71 325h1v1h-1zM157 325h1v1h-1zM173 325h1v1h-1zM71 326h1v1h-1zM157 326h1v1h-1zM173 326h1v1h-1zM71 327h1v1h-1zM156 327h1v1h-1zM173 327h1v1h-1zM71 328h1v1h-1zM156 328h1v1h-1zM173 328h1v1h-1zM71 329h1v1h-1zM156 329h1v1h-1zM173 329h1v1h-1zM71 330h1v1h-1zM155 330h1v1h-1zM174 330h1v1h-1zM72 331h1v1h-1zM155 331h1v1h-1zM174 331h1v1h-1zM72 332h1v1h-1zM155 332h1v1h-1zM174 332h1v1h-1zM72 333h1v1h-1zM155 333h1v1h-1zM174 333h1v1h-1zM72 334h1v1h-1zM155 334h1v1h-1zM174 334h1v1h-1zM72 335h1v1h-1zM155 335h1v1h-1zM175 335h1v1h-1zM72 336h1v1h-1zM155 336h1v1h-1zM175 336h1v1h-1zM73 337h1v1h-1zM154 337h1v1h-1zM175 337h1v1h-1zM73 338h1v1h-1zM154 338h1v1h-1zM175 338h1v1h-1zM73 339h1v1h-1zM154 339h1v1h-1zM175 339h1v1h-1zM73 340h1v1h-1zM154 340h1v1h-1zM175 340h1v1h-1zM74 341h1v1h-1zM154 341h1v1h-1zM176 341h1v1h-1zM74 342h1v1h-1zM154 342h1v1h-1zM176 342h1v1h-1zM74 343h1v1h-1zM154 343h1v1h-1zM176 343h1v1h-1zM74 344h1v1h-1zM153 344h1v1h-1zM176 344h1v1h-1zM74 345h1v1h-1zM153 345h1v1h-1zM176 345h1v1h-1zM75 346h1v1h-1zM153 346h1v1h-1zM176 346h1v1h-1zM75 347h1v1h-1zM153 347h1v1h-1zM176 347h1v1h-1zM76 348h1v1h-1zM152 348h1v1h-1zM176 348h1v1h-1zM76 349h1v1h-1zM152 349h1v1h-1zM177 349h1v1h-1zM76 350h1v1h-1zM152 350h1v1h-1zM177 350h1v1h-1zM76 351h1v1h-1zM151 351h1v1h-1zM177 351h1v1h-1zM77 352h1v1h-1zM151 352h1v1h-1zM178 352h1v1h-1zM77 353h1v1h-1zM151 353h1v1h-1zM178 353h1v1h-1zM77 354h1v1h-1zM151 354h1v1h-1zM178 354h1v1h-1zM77 355h1v1h-1zM150 355h1v1h-1zM178 355h1v1h-1zM78 356h1v1h-1zM150 356h1v1h-1zM178 356h1v1h-1zM78 357h1v1h-1zM150 357h1v1h-1zM178 357h1v1h-1zM78 358h1v1h-1zM150 358h1v1h-1zM179 358h1v1h-1zM78 359h1v1h-1zM149 359h1v1h-1zM179 359h1v1h-1zM79 360h1v1h-1zM149 360h1v1h-1zM179 360h1v1h-1zM589 360h3v1h-3zM79 361h1v1h-1zM149 361h1v1h-1zM179 361h1v1h-1zM587 361h2v1h-2zM592 361h2v1h-2zM80 362h1v1h-1zM148 362h1v1h-1zM180 362h1v1h-1zM586 362h1v1h-1zM594 362h1v1h-1zM80 363h1v1h-1zM148 363h1v1h-1zM180 363h1v1h-1zM584 363h2v1h-2zM595 363h1v1h-1zM80 364h1v1h-1zM148 364h1v1h-1zM180 364h1v1h-1zM583 364h1v1h-1zM596 364h1v1h-1zM80 365h1v1h-1zM148 365h1v1h-1zM180 365h1v1h-1zM583 365h1v1h-1zM597 365h1v1h-1zM81 366h1v1h-1zM147 366h1v1h-1zM181 366h1v1h-1zM582 366h1v1h-1zM598 366h1v1h-1zM81 367h1v1h-1zM147 367h1v1h-1zM181 367h1v1h-1zM581 367h1v1h-1zM598 367h1v1h-1zM81 368h1v1h-1zM147 368h1v1h-1zM181 368h1v1h-1zM581 368h1v1h-1zM599 368h1v1h-1zM82 369h1v1h-1zM147 369h1v1h-1zM181 369h1v1h-1zM580 369h1v1h-1zM599 369h1v1h-1zM82 370h1v1h-1zM146 370h1v1h-1zM181 370h1v1h-1zM579 370h1v1h-1zM600 370h1v1h-1zM83 371h1v1h-1zM145 371h1v1h-1zM181 371h1v1h-1zM579 371h1v1h-1zM600 371h1v1h-1zM83 372h1v1h-1zM145 372h1v1h-1zM182 372h1v1h-1zM578 372h1v1h-1zM600 372h1v1h-1zM83 373h1v1h-1zM145 373h1v1h-1zM182 373h1v1h-1zM578 373h1v1h-1zM601 373h1v1h-1zM84 374h1v1h-1zM145 374h1v1h-1zM182 374h1v1h-1zM578 374h1v1h-1zM601 374h1v1h-1zM84 375h1v1h-1zM145 375h1v1h-1zM182 375h1v1h-1zM577 375h1v1h-1zM602 375h1v1h-1zM85 376h1v1h-1zM145 376h1v1h-1zM183 376h1v1h-1zM576 376h1v1h-1zM602 376h1v1h-1zM85 377h1v1h-1zM144 377h1v1h-1zM183 377h1v1h-1zM576 377h1v1h-1zM602 377h1v1h-1zM86 378h1v1h-1zM144 378h1v1h-1zM183 378h1v1h-1zM575 378h1v1h-1zM603 378h1v1h-1zM86 379h1v1h-1zM143 379h1v1h-1zM183 379h1v1h-1zM574 379h1v1h-1zM603 379h1v1h-1zM87 380h1v1h-1zM143 380h1v1h-1zM183 380h1v1h-1zM574 380h1v1h-1zM604 380h1v1h-1zM88 381h1v1h-1zM143 381h1v1h-1zM183 381h1v1h-1zM573 381h1v1h-1zM604 381h1v1h-1zM88 382h1v1h-1zM143 382h1v1h-1zM184 382h1v1h-1zM573 382h1v1h-1zM605 382h1v1h-1zM89 383h1v1h-1zM143 383h1v1h-1zM184 383h1v1h-1zM572 383h1v1h-1zM605 383h1v1h-1zM89 384h1v1h-1zM142 384h1v1h-1zM184 384h1v1h-1zM571 384h1v1h-1zM605 384h1v1h-1zM90 385h1v1h-1zM142 385h1v1h-1zM184 385h1v1h-1zM571 385h1v1h-1zM606 385h1v1h-1zM91 386h1v1h-1zM142 386h1v1h-1zM185 386h1v1h-1zM570 386h1v1h-1zM606 386h1v1h-1zM91 387h1v1h-1zM141 387h1v1h-1zM185 387h1v1h-1zM570 387h1v1h-1zM607 387h1v1h-1zM92 388h1v1h-1zM141 388h1v1h-1zM185 388h1v1h-1zM569 388h2v1h-2zM607 388h1v1h-1zM93 389h1v1h-1zM141 389h1v1h-1zM186 389h1v1h-1zM568 389h1v1h-1zM608 389h1v1h-1zM93 390h1v1h-1zM140 390h1v1h-1zM186 390h1v1h-1zM568 390h1v1h-1zM609 390h1v1h-1zM94 391h1v1h-1zM140 391h1v1h-1zM186 391h1v1h-1zM567 391h1v1h-1zM609 391h1v1h-1zM94 392h1v1h-1zM139 392h1v1h-1zM186 392h1v1h-1zM567 392h1v1h-1zM610 392h1v1h-1zM95 393h1v1h-1zM139 393h1v1h-1zM187 393h1v1h-1zM566 393h1v1h-1zM610 393h1v1h-1zM96 394h1v1h-1zM139 394h1v1h-1zM187 394h1v1h-1zM565 394h1v1h-1zM611 394h1v1h-1zM96 395h1v1h-1zM139 395h1v1h-1zM187 395h1v1h-1zM565 395h1v1h-1zM612 395h1v1h-1zM97 396h1v1h-1zM138 396h1v1h-1zM187 396h1v1h-1zM564 396h1v1h-1zM612 396h1v1h-1zM98 397h1v1h-1zM137 397h1v1h-1zM188 397h1v1h-1zM564 397h1v1h-1zM613 397h1v1h-1zM98 398h1v1h-1zM137 398h1v1h-1zM188 398h1v1h-1zM563 398h1v1h-1zM613 398h1v1h-1zM99 399h1v1h-1zM136 399h1v1h-1zM188 399h1v1h-1zM562 399h1v1h-1zM614 399h1v1h-1zM100 400h1v1h-1zM136 400h1v1h-1zM188 400h1v1h-1zM562 400h1v1h-1zM615 400h1v1h-1zM100 401h1v1h-1zM136 401h1v1h-1zM189 401h1v1h-1zM561 401h1v1h-1zM615 401h1v1h-1zM101 402h1v1h-1zM135 402h1v1h-1zM189 402h1v1h-1zM560 402h1v1h-1zM616 402h1v1h-1zM102 403h1v1h-1zM135 403h1v1h-1zM189 403h1v1h-1zM559 403h1v1h-1zM616 403h1v1h-1zM103 404h1v1h-1zM133 404h2v1h-2zM190 404h1v1h-1zM558 404h1v1h-1zM617 404h1v1h-1zM104 405h1v1h-1zM132 405h1v1h-1zM190 405h1v1h-1zM557 405h1v1h-1zM618 405h1v1h-1zM105 406h1v1h-1zM131 406h1v1h-1zM191 406h1v1h-1zM557 406h1v1h-1zM618 406h1v1h-1zM106 407h1v1h-1zM129 407h2v1h-2zM191 407h1v1h-1zM556 407h1v1h-1zM619 407h1v1h-1zM107 408h1v1h-1zM128 408h1v1h-1zM191 408h1v1h-1zM554 408h2v1h-2zM620 408h1v1h-1zM108 409h2v1h-2zM126 409h2v1h-2zM191 409h1v1h-1zM553 409h1v1h-1zM620 409h1v1h-1zM110 410h1v1h-1zM125 410h1v1h-1zM192 410h1v1h-1zM552 410h1v1h-1zM621 410h1v1h-1zM111 411h4v1h-4zM121 411h4v1h-4zM193 411h1v1h-1zM552 411h1v1h-1zM621 411h1v1h-1zM115 412h6v1h-6zM193 412h1v1h-1zM550 412h2v1h-2zM622 412h1v1h-1zM194 413h1v1h-1zM549 413h1v1h-1zM623 413h1v1h-1zM194 414h1v1h-1zM548 414h1v1h-1zM623 414h1v1h-1zM194 415h1v1h-1zM546 415h2v1h-2zM624 415h2v1h-2zM195 416h1v1h-1zM545 416h1v1h-1zM626 416h1v1h-1zM195 417h1v1h-1zM543 417h2v1h-2zM627 417h1v1h-1zM196 418h1v1h-1zM542 418h1v1h-1zM627 418h1v1h-1zM196 419h1v1h-1zM541 419h1v1h-1zM628 419h2v1h-2zM196 420h1v1h-1zM539 420h2v1h-2zM630 420h1v1h-1zM197 421h1v1h-1zM538 421h1v1h-1zM630 421h1v1h-1zM197 422h1v1h-1zM534 422h4v1h-4zM631 422h2v1h-2zM198 423h1v1h-1zM533 423h1v1h-1zM633 423h1v1h-1zM198 424h1v1h-1zM529 424h4v1h-4zM634 424h1v1h-1zM199 425h1v1h-1zM517 425h12v1h-12zM635 425h1v1h-1zM199 426h1v1h-1zM515 426h2v1h-2zM636 426h2v1h-2zM199 427h1v1h-1zM512 427h3v1h-3zM638 427h1v1h-1zM199 428h1v1h-1zM508 428h4v1h-4zM639 428h2v1h-2zM200 429h1v1h-1zM506 429h2v1h-2zM641 429h1v1h-1zM200 430h1v1h-1zM503 430h3v1h-3zM642 430h2v1h-2zM201 431h1v1h-1zM501 431h2v1h-2zM644 431h2v1h-2zM201 432h1v1h-1zM378 432h6v1h-6zM499 432h2v1h-2zM646 432h1v1h-1zM780 432h5v1h-5zM202 433h1v1h-1zM374 433h4v1h-4zM384 433h3v1h-3zM498 433h1v1h-1zM647 433h2v1h-2zM776 433h4v1h-4zM202 434h1v1h-1zM373 434h1v1h-1zM387 434h4v1h-4zM496 434h2v1h-2zM649 434h2v1h-2zM769 434h7v1h-7zM203 435h1v1h-1zM369 435h4v1h-4zM391 435h2v1h-2zM493 435h3v1h-3zM651 435h1v1h-1zM764 435h5v1h-5zM203 436h1v1h-1zM367 436h2v1h-2zM393 436h1v1h-1zM492 436h1v1h-1zM652 436h3v1h-3zM760 436h4v1h-4zM203 437h1v1h-1zM366 437h1v1h-1zM394 437h1v1h-1zM490 437h2v1h-2zM655 437h2v1h-2zM757 437h3v1h-3zM204 438h2v1h-2zM364 438h2v1h-2zM395 438h2v1h-2zM489 438h1v1h-1zM657 438h2v1h-2zM756 438h1v1h-1zM206 439h1v1h-1zM362 439h2v1h-2zM397 439h1v1h-1zM488 439h1v1h-1zM659 439h2v1h-2zM752 439h4v1h-4zM206 440h1v1h-1zM361 440h1v1h-1zM397 440h1v1h-1zM486 440h2v1h-2zM661 440h3v1h-3zM749 440h3v1h-3zM207 441h1v1h-1zM359 441h2v1h-2zM398 441h2v1h-2zM482 441h4v1h-4zM664 441h1v1h-1zM746 441h3v1h-3zM208 442h2v1h-2zM357 442h2v1h-2zM400 442h1v1h-1zM481 442h1v1h-1zM665 442h4v1h-4zM715 442h12v1h-12zM742 442h4v1h-4zM210 443h1v1h-1zM356 443h1v1h-1zM401 443h1v1h-1zM479 443h2v1h-2zM669 443h3v1h-3zM712 443h3v1h-3zM727 443h5v1h-5zM739 443h3v1h-3zM211 444h1v1h-1zM355 444h1v1h-1zM401 444h1v1h-1zM477 444h2v1h-2zM672 444h3v1h-3zM685 444h27v1h-27zM732 444h7v1h-7zM212 445h2v1h-2zM354 445h1v1h-1zM402 445h2v1h-2zM474 445h3v1h-3zM675 445h10v1h-10zM214 446h2v1h-2zM352 446h2v1h-2zM404 446h2v1h-2zM473 446h1v1h-1zM216 447h1v1h-1zM351 447h1v1h-1zM406 447h1v1h-1zM471 447h2v1h-2zM217 448h1v1h-1zM349 448h2v1h-2zM407 448h2v1h-2zM469 448h2v1h-2zM218 449h2v1h-2zM347 449h2v1h-2zM409 449h1v1h-1zM467 449h2v1h-2zM220 450h1v1h-1zM346 450h1v1h-1zM409 450h1v1h-1zM464 450h3v1h-3zM221 451h2v1h-2zM344 451h2v1h-2zM410 451h2v1h-2zM462 451h2v1h-2zM223 452h2v1h-2zM340 452h4v1h-4zM412 452h2v1h-2zM460 452h2v1h-2zM225 453h2v1h-2zM338 453h2v1h-2zM414 453h2v1h-2zM457 453h3v1h-3zM227 454h1v1h-1zM337 454h1v1h-1zM416 454h1v1h-1zM455 454h2v1h-2zM228 455h4v1h-4zM335 455h2v1h-2zM417 455h4v1h-4zM451 455h4v1h-4zM232 456h4v1h-4zM332 456h3v1h-3zM421 456h1v1h-1zM447 456h4v1h-4zM236 457h4v1h-4zM322 457h10v1h-10zM422 457h5v1h-5zM434 457h5v1h-5zM443 457h4v1h-4zM240 458h4v1h-4zM319 458h3v1h-3zM427 458h7v1h-7zM438 458h5v1h-5zM244 459h5v1h-5zM307 459h12v1h-12zM249 460h5v1h-5zM301 460h6v1h-6zM254 461h47v1h-47z" fill="#800000"/>
<path d="M235 311h4v1h-4zM209 312h13v1h-13zM231 312h4v1h-4zM239 312h4v1h-4zM196 313h13v1h-13zM222 313h9v1h-9zM243 313h3v1h-3zM191 314h5v1h-5zM246 314h1v1h-1zM187 315h4v1h-4zM247 315h3v1h-3zM184 316h3v1h-3zM250 316h4v1h-4zM180 317h4v1h-4zM254 317h3v1h-3zM318 317h11v1h-11zM177 318h3v1h-3zM257 318h2v1h-2zM279 318h12v1h-12zM314 318h4v1h-4zM329 318h4v1h-4zM339 318h5v1h-5zM175 319h2v1h-2zM259 319h3v1h-3zM272 319h7v1h-7zM291 319h4v1h-4zM309 319h5v1h-5zM333 319h6v1h-6zM344 319h3v1h-3zM358 319h8v1h-8zM172 320h3v1h-3zM262 320h10v1h-10zM295 320h14v1h-14zM347 320h4v1h-4zM354 320h4v1h-4zM366 320h5v1h-5zM170 321h2v1h-2zM351 321h3v1h-3zM371 321h3v1h-3zM169 322h1v1h-1zM374 322h1v1h-1zM166 323h3v1h-3zM375 323h4v1h-4zM164 324h2v1h-2zM379 324h1v1h-1zM162 325h2v1h-2zM380 325h2v1h-2zM159 326h3v1h-3zM382 326h2v1h-2zM157 327h2v1h-2zM384 327h1v1h-1zM156 328h1v1h-1zM385 328h1v1h-1zM154 329h2v1h-2zM386 329h1v1h-1zM153 330h1v1h-1zM387 330h2v1h-2zM152 331h1v1h-1zM389 331h1v1h-1zM151 332h1v1h-1zM390 332h2v1h-2zM150 333h1v1h-1zM392 333h1v1h-1zM149 334h1v1h-1zM393 334h2v1h-2zM148 335h1v1h-1zM395 335h2v1h-2zM147 336h1v1h-1zM397 336h1v1h-1zM146 337h1v1h-1zM397 337h1v1h-1zM145 338h1v1h-1zM398 338h1v1h-1zM145 339h1v1h-1zM399 339h1v1h-1zM143 340h2v1h-2zM400 340h1v1h-1zM142 341h1v1h-1zM401 341h1v1h-1zM141 342h1v1h-1zM402 342h1v1h-1zM140 343h1v1h-1zM402 343h1v1h-1zM140 344h1v1h-1zM403 344h1v1h-1zM139 345h1v1h-1zM404 345h2v1h-2zM138 346h1v1h-1zM406 346h1v1h-1zM138 347h1v1h-1zM407 347h1v1h-1zM137 348h1v1h-1zM407 348h1v1h-1zM136 349h1v1h-1zM408 349h2v1h-2zM136 350h1v1h-1zM410 350h1v1h-1zM135 351h1v1h-1zM411 351h1v1h-1zM134 352h1v1h-1zM412 352h2v1h-2zM134 353h1v1h-1zM414 353h1v1h-1zM133 354h1v1h-1zM415 354h1v1h-1zM132 355h1v1h-1zM416 355h1v1h-1zM131 356h1v1h-1zM417 356h1v1h-1zM130 357h1v1h-1zM418 357h2v1h-2zM130 358h1v1h-1zM420 358h1v1h-1zM129 359h1v1h-1zM420 359h1v1h-1zM128 360h1v1h-1zM421 360h1v1h-1zM128 361h1v1h-1zM422 361h2v1h-2zM127 362h1v1h-1zM424 362h1v1h-1zM126 363h1v1h-1zM425 363h2v1h-2zM126 364h1v1h-1zM427 364h1v1h-1zM125 365h1v1h-1zM428 365h2v1h-2zM124 366h1v1h-1zM430 366h1v1h-1zM123 367h1v1h-1zM431 367h1v1h-1zM122 368h1v1h-1zM432 368h1v1h-1zM121 369h1v1h-1zM433 369h1v1h-1zM121 370h1v1h-1zM434 370h1v1h-1zM120 371h1v1h-1zM435 371h2v1h-2zM119 372h1v1h-1zM437 372h1v1h-1zM119 373h1v1h-1zM437 373h1v1h-1zM118 374h1v1h-1zM438 374h1v1h-1zM117 375h1v1h-1zM439 375h1v1h-1zM116 376h1v1h-1zM440 376h1v1h-1zM115 377h1v1h-1zM441 377h1v1h-1zM115 378h1v1h-1zM442 378h1v1h-1zM114 379h1v1h-1zM443 379h2v1h-2zM114 380h1v1h-1zM445 380h1v1h-1zM112 381h2v1h-2zM445 381h1v1h-1zM111 382h1v1h-1zM446 382h1v1h-1zM111 383h1v1h-1zM447 383h1v1h-1zM110 384h1v1h-1zM448 384h1v1h-1zM110 385h1v1h-1zM448 385h1v1h-1zM109 386h1v1h-1zM449 386h1v1h-1zM108 387h1v1h-1zM450 387h1v1h-1zM107 388h1v1h-1zM451 388h1v1h-1zM106 389h1v1h-1zM452 389h1v1h-1zM106 390h1v1h-1zM452 390h1v1h-1zM105 391h1v1h-1zM453 391h1v1h-1zM104 392h1v1h-1zM454 392h1v1h-1zM104 393h1v1h-1zM454 393h1v1h-1zM103 394h1v1h-1zM455 394h1v1h-1zM102 395h1v1h-1zM455 395h1v1h-1zM101 396h1v1h-1zM456 396h2v1h-2zM101 397h1v1h-1zM458 397h1v1h-1zM100 398h1v1h-1zM458 398h1v1h-1zM99 399h1v1h-1zM459 399h1v1h-1zM99 400h1v1h-1zM459 400h1v1h-1zM98 401h1v1h-1zM460 401h1v1h-1zM97 402h1v1h-1zM461 402h1v1h-1zM97 403h1v1h-1zM461 403h1v1h-1zM96 404h1v1h-1zM462 404h1v1h-1zM96 405h1v1h-1zM462 405h1v1h-1zM95 406h1v1h-1zM463 406h2v1h-2zM94 407h1v1h-1zM465 407h1v1h-1zM93 408h1v1h-1zM465 408h1v1h-1zM92 409h1v1h-1zM466 409h1v1h-1zM92 410h1v1h-1zM467 410h1v1h-1zM91 411h1v1h-1zM467 411h1v1h-1zM91 412h1v1h-1zM468 412h1v1h-1zM90 413h1v1h-1zM469 413h1v1h-1zM90 414h1v1h-1zM469 414h1v1h-1zM89 415h1v1h-1zM470 415h1v1h-1zM89 416h1v1h-1zM471 416h1v1h-1zM87 417h2v1h-2zM471 417h1v1h-1zM86 418h1v1h-1zM472 418h1v1h-1zM86 419h1v1h-1zM473 419h1v1h-1zM85 420h1v1h-1zM473 420h1v1h-1zM85 421h1v1h-1zM474 421h1v1h-1zM84 422h1v1h-1zM475 422h1v1h-1zM84 423h1v1h-1zM476 423h1v1h-1zM83 424h1v1h-1zM477 424h2v1h-2zM83 425h1v1h-1zM479 425h1v1h-1zM82 426h1v1h-1zM480 426h2v1h-2zM81 427h1v1h-1zM482 427h1v1h-1zM80 428h1v1h-1zM483 428h3v1h-3zM79 429h1v1h-1zM486 429h2v1h-2zM79 430h1v1h-1zM488 430h1v1h-1zM78 431h1v1h-1zM489 431h2v1h-2zM77 432h1v1h-1zM491 432h1v1h-1zM77 433h1v1h-1zM492 433h1v1h-1zM76 434h1v1h-1zM493 434h1v1h-1zM76 435h1v1h-1zM494 435h3v1h-3zM75 436h1v1h-1zM497 436h1v1h-1zM74 437h1v1h-1zM497 437h1v1h-1zM74 438h1v1h-1zM498 438h1v1h-1zM73 439h1v1h-1zM499 439h1v1h-1zM72 440h1v1h-1zM500 440h1v1h-1zM71 441h1v1h-1zM501 441h1v1h-1zM71 442h1v1h-1zM501 442h1v1h-1zM70 443h1v1h-1zM502 443h1v1h-1zM69 444h1v1h-1zM503 444h1v1h-1zM68 445h1v1h-1zM504 445h1v1h-1zM68 446h1v1h-1zM504 446h1v1h-1zM67 447h1v1h-1zM505 447h1v1h-1zM66 448h1v1h-1zM505 448h1v1h-1zM65 449h1v1h-1zM506 449h1v1h-1zM64 450h1v1h-1zM507 450h1v1h-1zM63 451h1v1h-1zM508 451h1v1h-1zM63 452h1v1h-1zM508 452h1v1h-1zM61 453h2v1h-2zM509 453h1v1h-1zM60 454h1v1h-1zM510 454h2v1h-2zM60 455h1v1h-1zM512 455h1v1h-1zM58 456h2v1h-2zM512 456h1v1h-1zM57 457h1v1h-1zM513 457h1v1h-1zM56 458h1v1h-1zM514 458h1v1h-1zM55 459h2v1h-2zM514 459h1v1h-1zM515 460h1v1h-1zM516 461h1v1h-1zM516 462h1v1h-1zM517 463h1v1h-1zM518 464h1v1h-1zM518 465h1v1h-1zM519 466h1v1h-1zM520 467h1v1h-1zM521 468h1v1h-1zM521 469h1v1h-1zM522 470h1v1h-1zM523 471h1v1h-1zM523 472h1v1h-1zM524 473h1v1h-1zM525 474h1v1h-1zM525 475h1v1h-1zM526 476h1v1h-1zM527 477h1v1h-1zM527 478h1v1h-1zM528 479h1v1h-1zM529 480h1v1h-1zM529 481h1v1h-1zM530 482h1v1h-1zM531 483h1v1h-1zM531 484h1v1h-1zM532 485h1v1h-1zM533 486h1v1h-1zM533 487h1v1h-1zM534 488h1v1h-1zM535 489h1v1h-1zM536 490h1v1h-1zM537 491h1v1h-1zM537 492h1v1h-1zM538 493h1v1h-1zM539 494h1v1h-1zM540 495h1v1h-1zM540 496h1v1h-1zM541 497h1v1h-1zM542 498h1v1h-1zM543 499h1v1h-1zM543 500h1v1h-1zM544 501h1v1h-1zM545 502h1v1h-1zM546 503h1v1h-1zM547 504h1v1h-1zM548 505h2v1h-2zM578 505h4v1h-4zM550 506h1v1h-1zM576 506h2v1h-2zM582 506h1v1h-1zM551 507h2v1h-2zM574 507h2v1h-2zM583 507h1v1h-1zM553 508h1v1h-1zM573 508h1v1h-1zM584 508h1v1h-1zM554 509h1v1h-1zM571 509h2v1h-2zM584 509h1v1h-1zM555 510h1v1h-1zM569 510h2v1h-2zM585 510h1v1h-1zM556 511h1v1h-1zM568 511h1v1h-1zM586 511h1v1h-1zM557 512h2v1h-2zM566 512h2v1h-2zM586 512h1v1h-1zM559 513h3v1h-3zM563 513h3v1h-3zM587 513h1v1h-1zM562 514h1v1h-1zM587 514h1v1h-1zM588 515h1v1h-1zM589 516h1v1h-1zM589 517h1v1h-1zM590 518h2v1h-2zM592 519h193v1h-193z" fill="#0000ff"/>
<path d="M194 316h50v1h-50zM191 317h3v1h-3zM244 317h3v1h-3zM184 318h7v1h-7zM247 318h1v1h-1zM180 319h4v1h-4zM248 319h1v1h-1zM178 320h2v1h-2zM249 320h3v1h-3zM175 321h3v1h-3zM252 321h3v1h-3zM173 322h2v1h-2zM255 322h2v1h-2zM170 323h3v1h-3zM257 323h3v1h-3zM275 323h10v1h-10zM169 324h1v1h-1zM260 324h2v1h-2zM268 324h7v1h-7zM285 324h7v1h-7zM166 325h3v1h-3zM262 325h6v1h-6zM292 325h2v1h-2zM314 325h15v1h-15zM164 326h2v1h-2zM294 326h2v1h-2zM308 326h6v1h-6zM329 326h4v1h-4zM160 327h4v1h-4zM296 327h3v1h-3zM302 327h6v1h-6zM333 327h4v1h-4zM366 327h9v1h-9zM157 328h3v1h-3zM299 328h3v1h-3zM337 328h4v1h-4zM357 328h9v1h-9zM375 328h7v1h-7zM155 329h2v1h-2zM341 329h7v1h-7zM354 329h3v1h-3zM382 329h5v1h-5zM154 330h1v1h-1zM348 330h6v1h-6zM387 330h4v1h-4zM152 331h2v1h-2zM391 331h4v1h-4zM151 332h1v1h-1zM395 332h11v1h-11zM151 333h1v1h-1zM406 333h41v1h-41zM149 334h2v1h-2zM447 334h6v1h-6zM496 334h15v1h-15zM148 335h1v1h-1zM453 335h9v1h-9zM492 335h4v1h-4zM511 335h5v1h-5zM672 335h27v1h-27zM147 336h1v1h-1zM462 336h9v1h-9zM490 336h2v1h-2zM516 336h1v1h-1zM664 336h8v1h-8zM699 336h1v1h-1zM146 337h1v1h-1zM471 337h1v1h-1zM489 337h1v1h-1zM517 337h5v1h-5zM657 337h7v1h-7zM700 337h2v1h-2zM145 338h1v1h-1zM472 338h4v1h-4zM486 338h3v1h-3zM522 338h7v1h-7zM641 338h8v1h-8zM652 338h5v1h-5zM702 338h2v1h-2zM145 339h1v1h-1zM476 339h10v1h-10zM529 339h5v1h-5zM639 339h2v1h-2zM649 339h3v1h-3zM704 339h2v1h-2zM143 340h2v1h-2zM534 340h3v1h-3zM637 340h2v1h-2zM706 340h1v1h-1zM142 341h1v1h-1zM537 341h4v1h-4zM600 341h4v1h-4zM616 341h5v1h-5zM636 341h1v1h-1zM707 341h1v1h-1zM141 342h1v1h-1zM541 342h1v1h-1zM584 342h5v1h-5zM599 342h1v1h-1zM604 342h1v1h-1zM614 342h2v1h-2zM621 342h15v1h-15zM708 342h1v1h-1zM140 343h1v1h-1zM542 343h2v1h-2zM559 343h18v1h-18zM582 343h2v1h-2zM589 343h3v1h-3zM597 343h2v1h-2zM605 343h2v1h-2zM612 343h2v1h-2zM709 343h1v1h-1zM140 344h1v1h-1zM544 344h2v1h-2zM555 344h4v1h-4zM577 344h2v1h-2zM581 344h1v1h-1zM592 344h5v1h-5zM607 344h5v1h-5zM710 344h1v1h-1zM139 345h1v1h-1zM546 345h3v1h-3zM552 345h3v1h-3zM579 345h2v1h-2zM711 345h2v1h-2zM138 346h1v1h-1zM549 346h3v1h-3zM713 346h1v1h-1zM138 347h1v1h-1zM714 347h2v1h-2zM137 348h1v1h-1zM716 348h1v1h-1zM136 349h1v1h-1zM717 349h2v1h-2zM136 350h1v1h-1zM719 350h4v1h-4zM135 351h1v1h-1zM723 351h9v1h-9zM134 352h1v1h-1zM732 352h4v1h-4zM134 353h1v1h-1zM736 353h3v1h-3zM133 354h1v1h-1zM739 354h2v1h-2zM132 355h1v1h-1zM741 355h3v1h-3zM131 356h1v1h-1zM744 356h2v1h-2zM130 357h1v1h-1zM746 357h1v1h-1zM130 358h1v1h-1zM747 358h2v1h-2zM129 359h1v1h-1zM749 359h3v1h-3zM128 360h1v1h-1zM752 360h2v1h-2zM128 361h1v1h-1zM754 361h4v1h-4zM776 361h9v1h-9zM127 362h1v1h-1zM758 362h8v1h-8zM768 362h8v1h-8zM126 363h1v1h-1zM766 363h2v1h-2zM126 364h1v1h-1zM125 365h1v1h-1zM124 366h1v1h-1zM123 367h1v1h-1zM122 368h1v1h-1zM121 369h1v1h-1zM121 370h1v1h-1zM120 371h1v1h-1zM119 372h1v1h-1zM119 373h1v1h-1zM118 374h1v1h-1zM117 375h1v1h-1zM116 376h1v1h-1zM115 377h1v1h-1zM115 378h1v1h-1zM114 379h1v1h-1zM114 380h1v1h-1zM112 381h2v1h-2zM111 382h1v1h-1zM111 383h1v1h-1zM110 384h1v1h-1zM110 385h1v1h-1zM109 386h1v1h-1zM108 387h1v1h-1zM107 388h1v1h-1zM106 389h1v1h-1zM106 390h1v1h-1zM105 391h1v1h-1zM104 392h1v1h-1zM104 393h1v1h-1zM103 394h1v1h-1zM102 395h1v1h-1zM101 396h1v1h-1zM101 397h1v1h-1zM100 398h1v1h-1zM99 399h1v1h-1zM99 400h1v1h-1zM98 401h1v1h-1zM97 402h1v1h-1zM97 403h1v1h-1zM96 404h1v1h-1zM96 405h1v1h-1zM95 406h1v1h-1zM94 407h1v1h-1zM93 408h1v1h-1zM92 409h1v1h-1zM92 410h1v1h-1zM91 411h1v1h-1zM91 412h1v1h-1zM90 413h1v1h-1zM90 414h1v1h-1zM89 415h1v1h-1zM89 416h1v1h-1zM87 417h2v1h-2zM86 418h1v1h-1zM86 419h1v1h-1zM85 420h1v1h-1zM85 421h1v1h-1zM84 422h1v1h-1zM84 423h1v1h-1zM83 424h1v1h-1zM83 425h1v1h-1zM82 426h1v1h-1zM81 427h1v1h-1zM80 428h1v1h-1zM79 429h1v1h-1zM79 430h1v1h-1zM78 431h1v1h-1zM77 432h1v1h-1zM77 433h1v1h-1zM76 434h1v1h-1zM76 435h1v1h-1zM75 436h1v1h-1zM74 437h1v1h-1zM74 438h1v1h-1zM73 439h1v1h-1zM72 440h1v1h-1zM71 441h1v1h-1zM71 442h1v1h-1zM70 443h1v1h-1zM69 444h1v1h-1zM68 445h1v1h-1zM68 446h1v1h-1zM67 447h1v1h-1zM66 448h1v1h-1zM65 449h1v1h-1zM64 450h1v1h-1zM63 451h1v1h-1zM63 452h1v1h-1zM61 453h2v1h-2zM60 454h1v1h-1zM60 455h1v1h-1zM58 456h2v1h-2zM57 457h1v1h-1zM56 458h1v1h-1zM55 459h2v1h-2z" fill="#000000"/>
<path d="M782 287h3v1h-3zM780 288h2v1h-2zM778 289h2v1h-2zM776 290h2v1h-2zM774 291h2v1h-2zM772 292h2v1h-2zM771 293h1v1h-1zM768 294h3v1h-3zM762 295h6v1h-6zM736 296h13v1h-13zM751 296h11v1h-11zM732 297h4v1h-4zM749 297h2v1h-2zM730 298h2v1h-2zM431 299h16v1h-16zM612 299h5v1h-5zM679 299h3v1h-3zM689 299h15v1h-15zM729 299h1v1h-1zM422 300h9v1h-9zM447 300h6v1h-6zM502 300h10v1h-10zM602 300h5v1h-5zM611 300h1v1h-1zM617 300h2v1h-2zM675 300h4v1h-4zM682 300h1v1h-1zM686 300h3v1h-3zM704 300h2v1h-2zM728 300h1v1h-1zM377 301h18v1h-18zM412 301h10v1h-10zM453 301h4v1h-4zM499 301h3v1h-3zM512 301h4v1h-4zM601 301h1v1h-1zM607 301h4v1h-4zM619 301h1v1h-1zM674 301h1v1h-1zM683 301h3v1h-3zM706 301h3v1h-3zM727 301h1v1h-1zM371 302h6v1h-6zM395 302h17v1h-17zM457 302h5v1h-5zM495 302h4v1h-4zM516 302h3v1h-3zM600 302h1v1h-1zM620 302h1v1h-1zM671 302h3v1h-3zM709 302h3v1h-3zM725 302h2v1h-2zM367 303h4v1h-4zM462 303h2v1h-2zM491 303h4v1h-4zM519 303h5v1h-5zM582 303h4v1h-4zM600 303h1v1h-1zM621 303h1v1h-1zM662 303h9v1h-9zM712 303h2v1h-2zM724 303h1v1h-1zM366 304h1v1h-1zM464 304h4v1h-4zM489 304h2v1h-2zM524 304h5v1h-5zM577 304h5v1h-5zM586 304h5v1h-5zM599 304h1v1h-1zM622 304h2v1h-2zM659 304h3v1h-3zM714 304h10v1h-10zM362 305h4v1h-4zM468 305h4v1h-4zM485 305h4v1h-4zM529 305h3v1h-3zM569 305h8v1h-8zM591 305h8v1h-8zM624 305h2v1h-2zM658 305h1v1h-1zM358 306h4v1h-4zM472 306h13v1h-13zM532 306h2v1h-2zM564 306h5v1h-5zM626 306h1v1h-1zM656 306h2v1h-2zM356 307h2v1h-2zM534 307h3v1h-3zM562 307h2v1h-2zM627 307h1v1h-1zM655 307h1v1h-1zM353 308h3v1h-3zM537 308h2v1h-2zM561 308h1v1h-1zM627 308h1v1h-1zM655 308h1v1h-1zM328 309h25v1h-25zM539 309h2v1h-2zM559 309h2v1h-2zM628 309h1v1h-1zM654 309h1v1h-1zM319 310h9v1h-9zM541 310h1v1h-1zM557 310h2v1h-2zM629 310h3v1h-3zM653 310h1v1h-1zM231 311h11v1h-11zM315 311h4v1h-4zM542 311h2v1h-2zM555 311h2v1h-2zM632 311h2v1h-2zM637 311h9v1h-9zM652 311h1v1h-1zM209 312h22v1h-22zM242 312h4v1h-4zM312 312h3v1h-3zM544 312h1v1h-1zM554 312h1v1h-1zM634 312h3v1h-3zM646 312h3v1h-3zM651 312h1v1h-1zM196 313h13v1h-13zM246 313h2v1h-2zM309 313h3v1h-3zM545 313h4v1h-4zM551 313h3v1h-3zM649 313h2v1h-2zM191 314h5v1h-5zM248 314h3v1h-3zM282 314h9v1h-9zM306 314h3v1h-3zM549 314h2v1h-2zM187 315h4v1h-4zM251 315h3v1h-3zM279 315h3v1h-3zM291 315h4v1h-4zM302 315h4v1h-4zM184 316h3v1h-3zM254 316h3v1h-3zM276 316h3v1h-3zM295 316h7v1h-7zM180 317h4v1h-4zM257 317h2v1h-2zM272 317h4v1h-4zM177 318h3v1h-3zM259 318h3v1h-3zM268 318h4v1h-4zM175 319h2v1h-2zM262 319h6v1h-6zM172 320h3v1h-3zM170 321h2v1h-2zM169 322h1v1h-1zM166 323h3v1h-3zM164 324h2v1h-2zM162 325h2v1h-2zM159 326h3v1h-3zM157 327h2v1h-2zM156 328h1v1h-1zM154 329h2v1h-2zM153 330h1v1h-1zM152 331h1v1h-1zM151 332h1v1h-1zM150 333h1v1h-1zM149 334h1v1h-1zM148 335h1v1h-1zM147 336h1v1h-1zM146 337h1v1h-1zM145 338h1v1h-1zM145 339h1v1h-1zM143 340h2v1h-2zM142 341h1v1h-1zM141 342h1v1h-1zM140 343h1v1h-1zM140 344h1v1h-1zM139 345h1v1h-1zM138 346h1v1h-1zM138 347h1v1h-1zM137 348h1v1h-1zM136 349h1v1h-1zM136 350h1v1h-1zM135 351h1v1h-1zM134 352h1v1h-1zM134 353h1v1h-1zM133 354h1v1h-1zM132 355h1v1h-1zM131 356h1v1h-1zM130 357h1v1h-1zM130 358h1v1h-1zM129 359h1v1h-1zM128 360h1v1h-1zM128 361h1v1h-1zM127 362h1v1h-1zM126 363h1v1h-1zM126 364h1v1h-1zM125 365h1v1h-1zM124 366h1v1h-1zM123 367h1v1h-1zM122 368h1v1h-1zM121 369h1v1h-1zM121 370h1v1h-1zM120 371h1v1h-1zM119 372h1v1h-1zM119 373h1v1h-1zM118 374h1v1h-1zM117 375h1v1h-1zM116 376h1v1h-1zM115 377h1v1h-1zM115 378h1v1h-1zM114 379h1v1h-1zM114 380h1v1h-1zM112 381h2v1h-2zM111 382h1v1h-1zM111 383h1v1h-1zM110 384h1v1h-1zM110 385h1v1h-1zM109 386h1v1h-1zM108 387h1v1h-1zM107 388h1v1h-1zM106 389h1v1h-1zM106 390h1v1h-1zM105 391h1v1h-1zM104 392h1v1h-1zM104 393h1v1h-1zM103 394h1v1h-1zM102 395h1v1h-1zM101 396h1v1h-1zM101 397h1v1h-1zM100 398h1v1h-1zM99 399h1v1h-1zM99 400h1v1h-1zM98 401h1v1h-1zM97 402h1v1h-1zM97 403h1v1h-1zM96 404h1v1h-1zM96 405h1v1h-1zM95 406h1v1h-1zM94 407h1v1h-1zM93 408h1v1h-1zM92 409h1v1h-1zM92 410h1v1h-1zM91 411h1v1h-1zM91 412h1v1h-1zM90 413h1v1h-1zM90 414h1v1h-1zM89 415h1v1h-1zM89 416h1v1h-1zM87 417h2v1h-2zM86 418h1v1h-1zM86 419h1v1h-1zM85 420h1v1h-1zM85 421h1v1h-1zM84 422h1v1h-1zM84 423h1v1h-1zM83 424h1v1h-1zM83 425h1v1h-1zM82 426h1v1h-1zM81 427h1v1h-1zM80 428h1v1h-1zM79 429h1v1h-1zM79 430h1v1h-1zM78 431h1v1h-1zM77 432h1v1h-1zM77 433h1v1h-1zM76 434h1v1h-1zM76 435h1v1h-1zM75 436h1v1h-1zM74 437h1v1h-1zM74 438h1v1h-1zM73 439h1v1h-1zM72 440h1v1h-1zM71 441h1v1h-1zM71 442h1v1h-1zM70 443h1v1h-1zM69 444h1v1h-1zM68 445h1v1h-1zM68 446h1v1h-1zM67 447h1v1h-1zM66 448h1v1h-1zM65 449h1v1h-1zM64 450h1v1h-1zM63 451h1v1h-1zM63 452h1v1h-1zM61 453h2v1h-2zM60 454h1v1h-1zM60 455h1v1h-1zM58 456h2v1h-2zM57 457h1v1h-1zM56 458h1v1h-1zM55 459h2v1h-2z" fill="#000000"/>
<path d="M733 297h3v1h-3zM731 298h2v1h-2zM692 299h9v1h-9zM730 299h1v1h-1zM689 300h3v1h-3zM701 300h3v1h-3zM729 300h1v1h-1zM688 301h1v1h-1zM704 301h2v1h-2zM727 301h2v1h-2zM678 302h4v1h-4zM687 302h1v1h-1zM706 302h1v1h-1zM724 302h3v1h-3zM677 303h2v1h-2zM682 303h2v1h-2zM686 303h1v1h-1zM707 303h4v1h-4zM722 303h2v1h-2zM676 304h1v1h-1zM684 304h2v1h-2zM711 304h11v1h-11zM664 305h3v1h-3zM672 305h4v1h-4zM667 306h5v1h-5z" fill="#ff0000"/>
</svg>
</body></html>
